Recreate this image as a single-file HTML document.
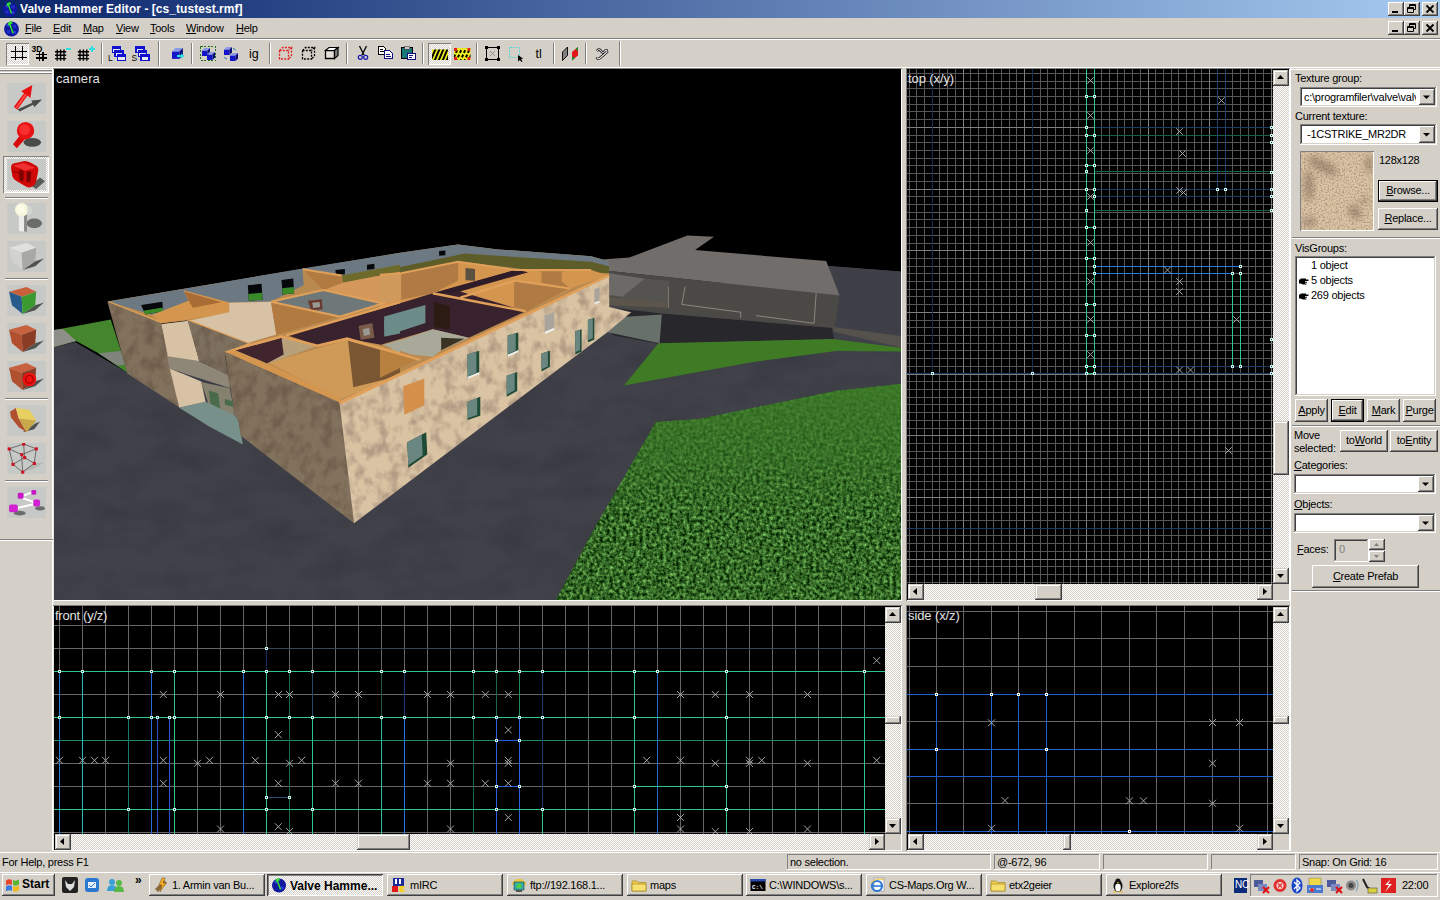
<!DOCTYPE html><html><head><meta charset="utf-8"><title>Valve Hammer Editor</title><style>
*{box-sizing:border-box;margin:0;padding:0}
html,body{width:1440px;height:900px;overflow:hidden;background:#d4d0c8;font-family:"Liberation Sans",sans-serif;font-size:11px;color:#000}
.a{position:absolute}
.t{position:absolute;white-space:nowrap;line-height:1}
.raised{box-shadow:inset -1px -1px #404040,inset 1px 1px #fff,inset -2px -2px #808080,inset 2px 2px #d4d0c8;background:#d4d0c8}
.sbb{box-shadow:inset -1px -1px #404040,inset 1px 1px #d4d0c8,inset -2px -2px #808080,inset 2px 2px #fff;background:#d4d0c8}
.sunken{box-shadow:inset -1px -1px #fff,inset 1px 1px #808080,inset -2px -2px #d4d0c8,inset 2px 2px #404040}
.sunk1{box-shadow:inset -1px -1px #fff,inset 1px 1px #808080}
.track{background-color:#ebe9e5;background-image:conic-gradient(#fff 25%,#d4d0c8 0 50%,#fff 0 75%,#d4d0c8 0);background-size:2px 2px}
.u{text-decoration:underline}
svg{position:absolute;display:block}
</style></head><body>
<div class="a " style="left:0px;top:0px;width:1440px;height:18px;background:linear-gradient(90deg,#0a246a 0%,#a6caf0 100%)"></div>
<svg style="left:2px;top:1px" width="16" height="16" viewBox="0 0 16 16"><circle cx="8" cy="8.5" r="7" fill="#1018a0"/><circle cx="5" cy="5" r="1.6" fill="#2838d8"/><circle cx="11" cy="6" r="1.8" fill="#2030c8"/><circle cx="5" cy="11" r="1.8" fill="#2030c8"/><circle cx="11" cy="11.5" r="1.6" fill="#2838d8"/><circle cx="8" cy="8" r="1.5" fill="#000070"/><path d="M5 2.2 L8.2 1 L9 3.2 L7.2 4 L10.2 12.2 L8.8 12.8 L5.8 4.6 L4.4 5.2 Z" fill="#30e030"/></svg>
<div class="t" style="left:20px;top:3px;font-size:12px;color:#fff;font-weight:bold;letter-spacing:0.05px">Valve Hammer Editor - [cs_tustest.rmf]</div>
<div class="a raised" style="left:1388px;top:2px;width:16px;height:14px;"></div>
<div class="a " style="left:1392px;top:11px;width:6px;height:2px;background:#000"></div>
<div class="a raised" style="left:1404px;top:2px;width:16px;height:14px;"></div>
<svg style="left:1404px;top:2px" width="16" height="14"><path d="M5.5 2.5h6v5h-6z M5.5 3.5h6" fill="none" stroke="#000" stroke-width="1"/><path d="M3.5 5.5h6v5h-6z" fill="#d4d0c8" stroke="#000"/><path d="M3.5 6.5h6" stroke="#000"/></svg>
<div class="a raised" style="left:1422px;top:2px;width:16px;height:14px;"></div>
<svg style="left:1422px;top:2px" width="16" height="14"><path d="M4.5 3.5l7 7M11.5 3.5l-7 7" stroke="#000" stroke-width="1.8"/></svg>
<div class="a raised" style="left:1388px;top:21px;width:16px;height:14px;"></div>
<div class="a " style="left:1392px;top:30px;width:6px;height:2px;background:#000"></div>
<div class="a raised" style="left:1404px;top:21px;width:16px;height:14px;"></div>
<svg style="left:1404px;top:21px" width="16" height="14"><path d="M5.5 2.5h6v5h-6z M5.5 3.5h6" fill="none" stroke="#000" stroke-width="1"/><path d="M3.5 5.5h6v5h-6z" fill="#d4d0c8" stroke="#000"/><path d="M3.5 6.5h6" stroke="#000"/></svg>
<div class="a raised" style="left:1422px;top:21px;width:16px;height:14px;"></div>
<svg style="left:1422px;top:21px" width="16" height="14"><path d="M4.5 3.5l7 7M11.5 3.5l-7 7" stroke="#000" stroke-width="1.8"/></svg>
<svg style="left:3px;top:20px" width="17" height="17" viewBox="0 0 16 16"><circle cx="8" cy="8.5" r="7" fill="#1018a0"/><circle cx="5" cy="5" r="1.6" fill="#2838d8"/><circle cx="11" cy="6" r="1.8" fill="#2030c8"/><circle cx="5" cy="11" r="1.8" fill="#2030c8"/><circle cx="11" cy="11.5" r="1.6" fill="#2838d8"/><circle cx="8" cy="8" r="1.5" fill="#000070"/><path d="M5 2.2 L8.2 1 L9 3.2 L7.2 4 L10.2 12.2 L8.8 12.8 L5.8 4.6 L4.4 5.2 Z" fill="#30e030"/></svg>
<div class="t" style="left:25px;top:23px;font-size:11px;color:#000;letter-spacing:-0.25px;"><span class="u">F</span>ile</div>
<div class="t" style="left:53px;top:23px;font-size:11px;color:#000;letter-spacing:-0.25px;"><span class="u">E</span>dit</div>
<div class="t" style="left:83px;top:23px;font-size:11px;color:#000;letter-spacing:-0.25px;"><span class="u">M</span>ap</div>
<div class="t" style="left:116px;top:23px;font-size:11px;color:#000;letter-spacing:-0.25px;"><span class="u">V</span>iew</div>
<div class="t" style="left:150px;top:23px;font-size:11px;color:#000;letter-spacing:-0.25px;"><span class="u">T</span>ools</div>
<div class="t" style="left:186px;top:23px;font-size:11px;color:#000;letter-spacing:-0.25px;"><span class="u">W</span>indow</div>
<div class="t" style="left:236px;top:23px;font-size:11px;color:#000;letter-spacing:-0.25px;"><span class="u">H</span>elp</div>
<div class="a " style="left:0px;top:38px;width:1440px;height:1px;background:#808080"></div>
<div class="a " style="left:0px;top:39px;width:1440px;height:1px;background:#fff"></div>
<div class="a " style="left:0px;top:67px;width:1440px;height:1px;background:#fff"></div>
<div class="a " style="left:101px;top:43px;width:1px;height:21px;background:#808080"></div>
<div class="a " style="left:102px;top:43px;width:1px;height:21px;background:#fff"></div>
<div class="a " style="left:191px;top:43px;width:1px;height:21px;background:#808080"></div>
<div class="a " style="left:192px;top:43px;width:1px;height:21px;background:#fff"></div>
<div class="a " style="left:269px;top:43px;width:1px;height:21px;background:#808080"></div>
<div class="a " style="left:270px;top:43px;width:1px;height:21px;background:#fff"></div>
<div class="a " style="left:346px;top:43px;width:1px;height:21px;background:#808080"></div>
<div class="a " style="left:347px;top:43px;width:1px;height:21px;background:#fff"></div>
<div class="a " style="left:422px;top:43px;width:1px;height:21px;background:#808080"></div>
<div class="a " style="left:423px;top:43px;width:1px;height:21px;background:#fff"></div>
<div class="a " style="left:476px;top:43px;width:1px;height:21px;background:#808080"></div>
<div class="a " style="left:477px;top:43px;width:1px;height:21px;background:#fff"></div>
<div class="a " style="left:553px;top:43px;width:1px;height:21px;background:#808080"></div>
<div class="a " style="left:554px;top:43px;width:1px;height:21px;background:#fff"></div>
<div class="a " style="left:585px;top:43px;width:1px;height:21px;background:#808080"></div>
<div class="a " style="left:586px;top:43px;width:1px;height:21px;background:#fff"></div>
<div class="a " style="left:158px;top:41px;width:1px;height:25px;background:#808080"></div>
<div class="a " style="left:159px;top:41px;width:1px;height:25px;background:#fff"></div>
<div class="a " style="left:619px;top:41px;width:1px;height:25px;background:#808080"></div>
<div class="a " style="left:620px;top:41px;width:1px;height:25px;background:#fff"></div>
<div class="a track" style="left:6px;top:43px;width:23px;height:22px;box-shadow:inset 1px 1px #808080,inset -1px -1px #fff"></div>
<div class="a track" style="left:428px;top:43px;width:23px;height:22px;box-shadow:inset 1px 1px #808080,inset -1px -1px #fff"></div>
<svg style="left:0;top:40px" width="640" height="28" viewBox="0 40 640 28" shape-rendering="crispEdges"><path d="M15.5 46v14M22.5 46v14M11 51.5h16M11 57.5h16" stroke="#000" stroke-width="1.5" fill="none"/><text x="31.5" y="52" font-family="Liberation Sans" font-weight="bold" font-size="8.5" fill="#000" shape-rendering="auto">3D</text><path d="M39.5 52v8.5M43 52v8.5M36 54.5h10.5M36 58h10.5" stroke="#000" stroke-width="1.3" fill="none"/><path d="M57.2 49.6v11.2M55.0 51.8h11.2M60.6 49.6v11.2M55.0 55.2h11.2M64.0 49.6v11.2M55.0 58.6h11.2" stroke="#000" stroke-width="1.4" fill="none" shape-rendering="auto"/><rect x="66" y="48" width="5" height="2" fill="#30e0e0"/><path d="M80.0 49.6v11.2M77.8 51.8h11.2M83.4 49.6v11.2M77.8 55.2h11.2M86.8 49.6v11.2M77.8 58.6h11.2" stroke="#000" stroke-width="1.4" fill="none" shape-rendering="auto"/><rect x="88.5" y="48" width="6" height="2" fill="#30e0e0"/><rect x="90.5" y="46" width="2" height="6" fill="#30e0e0"/><text x="108" y="61" font-family="Liberation Sans" font-size="8.5" fill="#000" shape-rendering="auto">L</text><rect x="112.5" y="46.5" width="8" height="6" fill="#e8e8f0" stroke="#1010d0" stroke-width="1.2"/><rect x="112" y="46" width="9" height="3.2" fill="#1010d0"/><rect x="115.0" y="50.5" width="8" height="6" fill="#e8e8f0" stroke="#1010d0" stroke-width="1.2"/><rect x="114.5" y="50" width="9" height="3.2" fill="#1010d0"/><rect x="117.5" y="54.5" width="8" height="6" fill="#e8e8f0" stroke="#1010d0" stroke-width="1.2"/><rect x="117" y="54" width="9" height="3.2" fill="#1010d0"/><text x="131.5" y="61" font-family="Liberation Sans" font-size="8.5" fill="#000" shape-rendering="auto">S</text><rect x="136.0" y="46.5" width="8" height="6" fill="#e8e8f0" stroke="#1010d0" stroke-width="1.2"/><rect x="135.5" y="46" width="9" height="3.2" fill="#1010d0"/><rect x="138.5" y="50.5" width="8" height="6" fill="#e8e8f0" stroke="#1010d0" stroke-width="1.2"/><rect x="138.0" y="50" width="9" height="3.2" fill="#1010d0"/><rect x="141.0" y="54.5" width="8" height="6" fill="#e8e8f0" stroke="#1010d0" stroke-width="1.2"/><rect x="140.5" y="54" width="9" height="3.2" fill="#1010d0"/><g shape-rendering="auto"><polygon points="172,51.375 179.5,51.375 179.5,58.875 172,58.875" fill="#1414c8"/><polygon points="172,51.375 175.375,48 182.875,48 179.5,51.375" fill="#8a9ae8"/><polygon points="179.5,51.375 182.875,48 182.875,55.5 179.5,58.875" fill="#080878"/><path d="M177 56h5" stroke="#30e0e0" stroke-width="2.2"/><polygon points="181,53.5 184.5,56 181,58.5" fill="#30e0e0"/></g><rect x="200.5" y="46.5" width="15" height="14" fill="none" stroke="#207020" stroke-dasharray="2 1.5"/><g shape-rendering="auto"><polygon points="202,50.475 207.5,50.475 207.5,55.975 202,55.975" fill="#1414c8"/><polygon points="202,50.475 204.475,48 209.975,48 207.5,50.475" fill="#8a9ae8"/><polygon points="207.5,50.475 209.975,48 209.975,53.5 207.5,55.975" fill="#080878"/><polygon points="207,54.475 212.5,54.475 212.5,59.975 207,59.975" fill="#1414c8"/><polygon points="207,54.475 209.475,52 214.975,52 212.5,54.475" fill="#8a9ae8"/><polygon points="212.5,54.475 214.975,52 214.975,57.5 212.5,59.975" fill="#080878"/></g><g shape-rendering="auto"><polygon points="224,49.475 229.5,49.475 229.5,54.975 224,54.975" fill="#1414c8"/><polygon points="224,49.475 226.475,47 231.975,47 229.5,49.475" fill="#8a9ae8"/><polygon points="229.5,49.475 231.975,47 231.975,52.5 229.5,54.975" fill="#080878"/><polygon points="230,55.475 235.5,55.475 235.5,60.975 230,60.975" fill="#1414c8"/><polygon points="230,55.475 232.475,53 237.975,53 235.5,55.475" fill="#8a9ae8"/><polygon points="235.5,55.475 237.975,53 237.975,58.5 235.5,60.975" fill="#080878"/><path d="M233 48.5q2 0 2.5 2M227 59q-2 0-2.5-2" stroke="#2080a0" fill="none" stroke-width="1"/></g><text x="249" y="58" font-family="Liberation Sans" font-size="12.5" fill="#000" shape-rendering="auto">ig</text><path d="M279.5 50.5h9v8.5h-9zM279.5 50.5l3-3h9l-3 3M291.5 47.5v8.5l-3 3" fill="none" stroke="#e02020" stroke-width="1.3" stroke-dasharray="2 1.3" shape-rendering="auto"/><path d="M302.5 50.5h9v8.5h-9zM302.5 50.5l3-3h9l-3 3M314.5 47.5v8.5l-3 3" fill="none" stroke="#000" stroke-width="1.3" stroke-dasharray="2 1.3" shape-rendering="auto"/><g shape-rendering="auto"><polygon points="325.5,50.5 334.5,50.5 334.5,58.5 325.5,58.5" fill="#e4e0d8" stroke="#000" stroke-width="1.3"/><polygon points="325.5,50.5 329,47.5 338,47.5 334.5,50.5" fill="#fff" stroke="#000" stroke-width="1.2"/><polygon points="334.5,50.5 338,47.5 338,55.5 334.5,58.5" fill="#808080" stroke="#000" stroke-width="1.2"/></g><g shape-rendering="auto" fill="none"><path d="M359.5 46l4.5 9M366.5 46l-4.5 9" stroke="#000" stroke-width="1.3"/><circle cx="360.3" cy="57.3" r="2" stroke="#1818b0" stroke-width="1.2"/><circle cx="365.7" cy="57.3" r="2" stroke="#1818b0" stroke-width="1.2"/></g><path d="M378.5 46.5h5l2 2v6h-7z" fill="#fff" stroke="#000"/><path d="M380 49.5h3M380 51.5h4" stroke="#000"/><path d="M384.5 50.5h5l3 3v5h-8z" fill="#fff" stroke="#101080"/><path d="M386 54.5h4M386 56.5h5" stroke="#101080"/><rect x="401.5" y="47.5" width="11" height="11" fill="#187878" stroke="#000"/><rect x="404.5" y="46" width="5" height="3" fill="#c8c8c8" stroke="#444" stroke-width="0.6"/><rect x="407.5" y="53.5" width="8" height="6" fill="#fff" stroke="#101080"/><path d="M409 55.5h4M409 57.5h3" stroke="#101080"/><clipPath id="cst"><rect x="432" y="49.5" width="16" height="10.5"/></clipPath><g clip-path="url(#cst)" shape-rendering="auto"><rect x="430" y="48" width="20" height="14" fill="#f0f020"/><path d="M430 62l6-14M434 62l6-14M438 62l6-14M442 62l6-14M446 62l6-14" stroke="#000" stroke-width="2"/></g><clipPath id="cst2"><rect x="454" y="48" width="16.5" height="12"/></clipPath><g clip-path="url(#cst2)" shape-rendering="auto"><rect x="452" y="46" width="20" height="16" fill="#f0f020"/><path d="M452 62l6-14M456 62l6-14M460 62l6-14M464 62l6-14M468 62l6-14" stroke="#000" stroke-width="2" stroke-dasharray="3 2"/><rect x="454" y="48" width="3" height="3" fill="#e02010"/><rect x="467.5" y="48" width="3" height="3" fill="#e02010"/><rect x="454" y="57" width="3" height="3" fill="#e02010"/><rect x="467.5" y="57" width="3" height="3" fill="#e02010"/></g><rect x="486.5" y="47.5" width="12" height="12" fill="none" stroke="#000" stroke-width="1.4"/><path d="M490 51l5 5M495 51l-5 5" stroke="#909090" shape-rendering="auto"/><rect x="485" y="46" width="3" height="3" fill="#000"/><rect x="497" y="46" width="3" height="3" fill="#000"/><rect x="485" y="58" width="3" height="3" fill="#000"/><rect x="497" y="58" width="3" height="3" fill="#000"/><rect x="509.5" y="47.5" width="10" height="10" fill="none" stroke="#60d8d0" stroke-width="1.2" stroke-dasharray="2 1"/><polygon points="518,55 518,61.5 519.8,60 521.5,62 522.5,61.2 521,59.3 523,58.5" fill="#000" shape-rendering="auto"/><text x="535.5" y="58" font-family="Liberation Sans" font-size="12.5" fill="#000" shape-rendering="auto">tl</text><g shape-rendering="auto"><polygon points="562.5,52 567.5,47 567.5,55.5 562.5,60.5" fill="#808080" stroke="#000" stroke-width="0.9"/><polygon points="572,52 578,47 578,55.5 572,60.5" fill="#e01818"/><polygon points="575.5,49 578,47 578,51" fill="#109030"/><polygon points="572,56.5 572,60.5 575,58" fill="#109030"/></g><g shape-rendering="auto" fill="none"><path d="M597 51q2-3 4 0t4 0q2-2 2 1l-7 6q-3 2-3-1" stroke="#000" stroke-width="2.6"/><path d="M597 51q2-3 4 0t4 0q2-2 2 1l-7 6q-3 2-3-1" stroke="#e8e8e8" stroke-width="1.2"/></g></svg>
<div class="a " style="left:0px;top:69px;width:53px;height:1px;background:#fff"></div>
<div class="a " style="left:0px;top:70px;width:53px;height:1px;background:#808080"></div>
<div class="a " style="left:0px;top:72px;width:53px;height:1px;background:#fff"></div>
<div class="a " style="left:0px;top:73px;width:53px;height:1px;background:#808080"></div>
<div class="a " style="left:52px;top:68px;width:1px;height:783px;background:#fff"></div>
<div class="a " style="left:53px;top:68px;width:1px;height:783px;background:#e6e4de"></div>
<div class="a " style="left:5px;top:197px;width:43px;height:1px;background:#808080"></div>
<div class="a " style="left:5px;top:198px;width:43px;height:1px;background:#fff"></div>
<div class="a " style="left:5px;top:278px;width:43px;height:1px;background:#808080"></div>
<div class="a " style="left:5px;top:279px;width:43px;height:1px;background:#fff"></div>
<div class="a " style="left:5px;top:398px;width:43px;height:1px;background:#808080"></div>
<div class="a " style="left:5px;top:399px;width:43px;height:1px;background:#fff"></div>
<div class="a " style="left:5px;top:480px;width:43px;height:1px;background:#808080"></div>
<div class="a " style="left:5px;top:481px;width:43px;height:1px;background:#fff"></div>
<div class="a " style="left:0px;top:539px;width:53px;height:1px;background:#808080"></div>
<div class="a " style="left:0px;top:540px;width:53px;height:1px;background:#fff"></div>
<div class="a track" style="left:3px;top:156px;width:46px;height:37px;box-shadow:inset 1px 1px #808080,inset -1px -1px #fff"></div>
<svg style="left:7px;top:83px" width="39" height="31" viewBox="0 0 40 32"><rect width="40" height="32" fill="#c7c9c6"/><polygon points="11,27 13,29.5 27,22.5 28,25 36,17 25,18 26,20.5" fill="#4a4c4a"/><polygon points="7,24.5 10.5,27.5 21,13 24,15.5 26,2 14.5,8.5 17.5,10.5" fill="#e81010"/><polygon points="9,25 18.5,11 20,12 10,26.5" fill="#ff5050"/></svg>
<svg style="left:7px;top:121px" width="39" height="31" viewBox="0 0 40 32"><rect width="40" height="32" fill="#c7c9c6"/><ellipse cx="26" cy="22" rx="9" ry="4.5" fill="#4a4c4a"/><polygon points="6,24 14,14 19,18 10,28" fill="#d80c0c"/><circle cx="19" cy="10" r="9" fill="#e81414"/><circle cx="18" cy="9" r="5.5" fill="#f83030"/></svg>
<svg style="left:7px;top:159px" width="39" height="31" viewBox="0 0 40 32"><rect width="40" height="32" fill="#c7c9c6"/><polygon points="24,27 34,19 39,23 30,31" fill="#5a5c5a"/><path d="M4 9q0-5 5-5l9-2q3 0 7 2l5 3q3 2 2 6l-2 10q-1 4-5 6q-3 1-6-1l-9-5q-5-3-5-8z" fill="#d00808"/><path d="M6 7l11-3l12 5l-10 3z" fill="#f03030"/><path d="M12 12q3-2 5 1l0 9q-2 2-4 0z M20 13q3-1 5 1l-1 9q-2 2-4 0z" fill="#7a0202"/><path d="M5 12q6 4 13 1" stroke="#900" stroke-width="1.2" fill="none"/></svg>
<svg style="left:7px;top:203px" width="39" height="31" viewBox="0 0 40 32"><rect width="40" height="32" fill="#c7c9c6"/><ellipse cx="28" cy="21" rx="8" ry="5" fill="#6a6c6a"/><rect x="12" y="12" width="8.5" height="17.5" rx="2.5" fill="#ecece8"/><rect x="17.5" y="12" width="3" height="17.5" fill="#8a8a88"/><circle cx="15" cy="7" r="7" fill="#f6f6dc"/><circle cx="14" cy="6" r="4" fill="#fcfce8"/><rect x="21" y="3" width="4.5" height="9" rx="2" fill="#d4d4d0"/></svg>
<svg style="left:7px;top:241px" width="39" height="31" viewBox="0 0 40 32"><rect width="40" height="32" fill="#c7c9c6"/><polygon points="16,30 29,21 38,18 29,26" fill="#50524f"/><polygon points="2,7 20,2 30,7 15,12" fill="#e0e0de"/><polygon points="2,7 15,12 16,30 5,21" fill="#d2d2d0"/><polygon points="15,12 30,7 29,21 16,30" fill="#a8a8a6"/></svg>
<svg style="left:7px;top:285px" width="39" height="31" viewBox="0 0 40 32"><rect width="40" height="32" fill="#c7c9c6"/><polygon points="16,30 29,21 38,18 29,26" fill="#50524f"/><polygon points="2,7 20,2 30,7 15,12" fill="#c8603c"/><polygon points="2,7 15,12 16,30 5,21" fill="#285a8c"/><polygon points="15,12 30,7 29,21 16,30" fill="#3a9a30"/></svg>
<svg style="left:7px;top:323px" width="39" height="31" viewBox="0 0 40 32"><rect width="40" height="32" fill="#c7c9c6"/><polygon points="16,30 29,21 38,18 29,26" fill="#50524f"/><polygon points="2,7 20,2 30,7 15,12" fill="#c8623e"/><polygon points="2,7 15,12 16,30 5,21" fill="#b0502e"/><polygon points="15,12 30,7 29,21 16,30" fill="#8a3c24"/></svg>
<svg style="left:7px;top:361px" width="39" height="31" viewBox="0 0 40 32"><rect width="40" height="32" fill="#c7c9c6"/><polygon points="16,30 29,21 38,18 29,26" fill="#50524f"/><polygon points="2,7 20,2 30,7 15,12" fill="#c8623e"/><polygon points="2,7 15,12 16,30 5,21" fill="#b0502e"/><polygon points="15,12 30,7 29,21 16,30" fill="#8a3c24"/><circle cx="23" cy="19" r="7" fill="#f01010"/><circle cx="23" cy="19" r="4" fill="none" stroke="#900" stroke-width="1.2"/></svg>
<svg style="left:7px;top:405px" width="39" height="31" viewBox="0 0 40 32"><rect width="40" height="32" fill="#c7c9c6"/><polygon points="16,28 29,19 34,17 28,25" fill="#50524f"/><polygon points="3,7 9,3 12,14 20,28 12,23 4,13" fill="#b0502e"/><polygon points="9,3 23,5 30,16 12,14" fill="#e8d060"/><polygon points="12,14 30,16 20,28" fill="#c8a848"/></svg>
<svg style="left:7px;top:443px" width="39" height="31" viewBox="0 0 40 32"><rect width="40" height="32" fill="#c7c9c6"/><polygon points="16,30 28,21 38,20 27,27" fill="#b4b6b2"/><path d="M2 6L17 1" stroke="#505050" stroke-width="0.8"/><path d="M17 1L30 6" stroke="#505050" stroke-width="0.8"/><path d="M30 6L15 12" stroke="#505050" stroke-width="0.8"/><path d="M15 12L2 6" stroke="#505050" stroke-width="0.8"/><path d="M2 6L6 22" stroke="#505050" stroke-width="0.8"/><path d="M30 6L28 21" stroke="#505050" stroke-width="0.8"/><path d="M15 12L16 30" stroke="#505050" stroke-width="0.8"/><path d="M6 22L16 30" stroke="#505050" stroke-width="0.8"/><path d="M28 21L16 30" stroke="#505050" stroke-width="0.8"/><path d="M17 1L18 15" stroke="#505050" stroke-width="0.8"/><path d="M6 22L18 15" stroke="#505050" stroke-width="0.8"/><path d="M28 21L18 15" stroke="#505050" stroke-width="0.8"/><rect x="0.5" y="4.5" width="3.2" height="3.2" fill="#d01020"/><rect x="15.5" y="-0.5" width="3.2" height="3.2" fill="#d01020"/><rect x="28.5" y="4.5" width="3.2" height="3.2" fill="#d01020"/><rect x="13.5" y="10.5" width="3.2" height="3.2" fill="#d01020"/><rect x="4.5" y="20.5" width="3.2" height="3.2" fill="#d01020"/><rect x="26.5" y="19.5" width="3.2" height="3.2" fill="#d01020"/><rect x="14.5" y="28.5" width="3.2" height="3.2" fill="#d01020"/><rect x="16.5" y="13.5" width="3.2" height="3.2" fill="#d01020"/></svg>
<svg style="left:7px;top:487px" width="39" height="31" viewBox="0 0 40 32"><rect width="40" height="32" fill="#c7c9c6"/><ellipse cx="13" cy="27" rx="6" ry="2.5" fill="#6a6c6a"/><ellipse cx="34" cy="22" rx="5" ry="2.2" fill="#6a6c6a"/><path d="M14 10L27 5M15 11L31 17M9 22L31 17" stroke="#fff" stroke-width="2"/><rect x="11" y="6" width="6" height="6" rx="1.5" fill="#c818c8"/><rect x="25" y="3" width="5" height="5" rx="1.5" fill="#c818c8"/><rect x="27" y="13" width="7" height="7" rx="2" fill="#d020d0"/><rect x="2" y="18" width="9" height="8" rx="2" fill="#d020d0"/></svg>
<div class="a " style="left:53px;top:68px;width:849px;height:533px;background:#000;box-shadow:inset 1px 1px #808080,inset -1px -1px #fff"></div>
<div class="a " style="left:906px;top:68px;width:384px;height:533px;background:#000;box-shadow:inset 1px 1px #808080,inset -1px -1px #fff"></div>
<div class="a " style="left:53px;top:605px;width:849px;height:246px;background:#000;box-shadow:inset 1px 1px #808080,inset -1px -1px #fff"></div>
<div class="a " style="left:906px;top:605px;width:384px;height:246px;background:#000;box-shadow:inset 1px 1px #808080,inset -1px -1px #fff"></div>
<div class="a " style="left:53px;top:69px;width:1px;height:532px;background:#e6e4de"></div>
<div class="a " style="left:53px;top:606px;width:1px;height:245px;background:#e6e4de"></div>
<div class="a track" style="left:1273px;top:70px;width:16px;height:514px;"></div>
<div class="a sbb" style="left:1273px;top:70px;width:16px;height:16px;"></div>
<svg style="left:0;top:0" width="1440" height="900" viewBox="0 0 1440 900"><polygon points="1277,79 1284,79 1280.5,75" fill="#000"/></svg>
<div class="a sbb" style="left:1273px;top:568px;width:16px;height:16px;"></div>
<svg style="left:0;top:0" width="1440" height="900" viewBox="0 0 1440 900"><polygon points="1277,574 1284,574 1280.5,578" fill="#000"/></svg>
<div class="a sbb" style="left:1273px;top:421px;width:16px;height:54px;"></div>
<div class="a track" style="left:908px;top:584px;width:365px;height:16px;"></div>
<div class="a sbb" style="left:908px;top:584px;width:16px;height:16px;"></div>
<svg style="left:0;top:0" width="1440" height="900" viewBox="0 0 1440 900"><polygon points="917,588 917,595 913,591.5" fill="#000"/></svg>
<div class="a sbb" style="left:1257px;top:584px;width:16px;height:16px;"></div>
<svg style="left:0;top:0" width="1440" height="900" viewBox="0 0 1440 900"><polygon points="1263,588 1263,595 1267,591.5" fill="#000"/></svg>
<div class="a sbb" style="left:1035px;top:584px;width:27px;height:16px;"></div>
<div class="a " style="left:1273px;top:584px;width:16px;height:16px;background:#d4d0c8"></div>
<div class="a track" style="left:885px;top:607px;width:16px;height:227px;"></div>
<div class="a sbb" style="left:885px;top:607px;width:16px;height:16px;"></div>
<svg style="left:0;top:0" width="1440" height="900" viewBox="0 0 1440 900"><polygon points="889,616 896,616 892.5,612" fill="#000"/></svg>
<div class="a sbb" style="left:885px;top:818px;width:16px;height:16px;"></div>
<svg style="left:0;top:0" width="1440" height="900" viewBox="0 0 1440 900"><polygon points="889,824 896,824 892.5,828" fill="#000"/></svg>
<div class="a sbb" style="left:885px;top:716px;width:16px;height:8px;"></div>
<div class="a track" style="left:55px;top:834px;width:830px;height:16px;"></div>
<div class="a sbb" style="left:55px;top:834px;width:16px;height:16px;"></div>
<svg style="left:0;top:0" width="1440" height="900" viewBox="0 0 1440 900"><polygon points="64,838 64,845 60,841.5" fill="#000"/></svg>
<div class="a sbb" style="left:869px;top:834px;width:16px;height:16px;"></div>
<svg style="left:0;top:0" width="1440" height="900" viewBox="0 0 1440 900"><polygon points="875,838 875,845 879,841.5" fill="#000"/></svg>
<div class="a sbb" style="left:357px;top:834px;width:53px;height:16px;"></div>
<div class="a " style="left:885px;top:834px;width:16px;height:16px;background:#d4d0c8"></div>
<div class="a track" style="left:1273px;top:607px;width:16px;height:227px;"></div>
<div class="a sbb" style="left:1273px;top:607px;width:16px;height:16px;"></div>
<svg style="left:0;top:0" width="1440" height="900" viewBox="0 0 1440 900"><polygon points="1277,616 1284,616 1280.5,612" fill="#000"/></svg>
<div class="a sbb" style="left:1273px;top:818px;width:16px;height:16px;"></div>
<svg style="left:0;top:0" width="1440" height="900" viewBox="0 0 1440 900"><polygon points="1277,824 1284,824 1280.5,828" fill="#000"/></svg>
<div class="a sbb" style="left:1273px;top:716px;width:16px;height:8px;"></div>
<div class="a track" style="left:908px;top:834px;width:365px;height:16px;"></div>
<div class="a sbb" style="left:908px;top:834px;width:16px;height:16px;"></div>
<svg style="left:0;top:0" width="1440" height="900" viewBox="0 0 1440 900"><polygon points="917,838 917,845 913,841.5" fill="#000"/></svg>
<div class="a sbb" style="left:1257px;top:834px;width:16px;height:16px;"></div>
<svg style="left:0;top:0" width="1440" height="900" viewBox="0 0 1440 900"><polygon points="1263,838 1263,845 1267,841.5" fill="#000"/></svg>
<div class="a sbb" style="left:1063px;top:834px;width:8px;height:16px;"></div>
<div class="a " style="left:1273px;top:834px;width:16px;height:16px;background:#d4d0c8"></div>
<svg style="left:907px;top:69px" width="366" height="515" viewBox="907 69 366 515" shape-rendering="crispEdges"><path d="M909.5 69V584M916.5 69V584M924.5 69V584M932.5 69V584M939.5 69V584M947.5 69V584M955.5 69V584M970.5 69V584M978.5 69V584M986.5 69V584M993.5 69V584M1001.5 69V584M1009.5 69V584M1016.5 69V584M1032.5 69V584M1040.5 69V584M1047.5 69V584M1055.5 69V584M1063.5 69V584M1070.5 69V584M1078.5 69V584M1094.5 69V584M1101.5 69V584M1109.5 69V584M1117.5 69V584M1124.5 69V584M1132.5 69V584M1140.5 69V584M1155.5 69V584M1163.5 69V584M1171.5 69V584M1178.5 69V584M1186.5 69V584M1194.5 69V584M1201.5 69V584M1217.5 69V584M1225.5 69V584M1232.5 69V584M1240.5 69V584M1248.5 69V584M1255.5 69V584M1263.5 69V584M907 73.5H1273M907 81.5H1273M907 88.5H1273M907 96.5H1273M907 104.5H1273M907 111.5H1273M907 119.5H1273M907 135.5H1273M907 142.5H1273M907 150.5H1273M907 158.5H1273M907 165.5H1273M907 173.5H1273M907 181.5H1273M907 196.5H1273M907 204.5H1273M907 212.5H1273M907 219.5H1273M907 227.5H1273M907 235.5H1273M907 243.5H1273M907 258.5H1273M907 266.5H1273M907 273.5H1273M907 281.5H1273M907 289.5H1273M907 296.5H1273M907 304.5H1273M907 320.5H1273M907 327.5H1273M907 335.5H1273M907 343.5H1273M907 350.5H1273M907 358.5H1273M907 366.5H1273M907 381.5H1273M907 389.5H1273M907 397.5H1273M907 404.5H1273M907 412.5H1273M907 420.5H1273M907 428.5H1273M907 443.5H1273M907 451.5H1273M907 458.5H1273M907 466.5H1273M907 474.5H1273M907 481.5H1273M907 489.5H1273M907 505.5H1273M907 512.5H1273M907 520.5H1273M907 528.5H1273M907 535.5H1273M907 543.5H1273M907 551.5H1273M907 566.5H1273M907 574.5H1273M907 582.5H1273" stroke="#575757" fill="none"/><path d="M963.5 69V584M1024.5 69V584M1086.5 69V584M1148.5 69V584M1209.5 69V584M1271.5 69V584M907 127.5H1273M907 189.5H1273M907 250.5H1273M907 312.5H1273M907 374.5H1273M907 435.5H1273M907 497.5H1273M907 559.5H1273" stroke="#7e7e7e" fill="none"/><path d="M932.5 69L932.5 373.5" stroke="#18304e" stroke-width="1"/><path d="M1032.5 69L1032.5 373.5" stroke="#18304e" stroke-width="1"/><path d="M907 373.5L1273 373.5" stroke="#1b3a68" stroke-width="1"/><path d="M1094.5 366.5L1273 366.5" stroke="#1b3a68" stroke-width="1"/><path d="M907 528.5L1273 528.5" stroke="#1b3a68" stroke-width="1"/><path d="M1094.5 127.5L1273 127.5" stroke="#1b3c60" stroke-width="1"/><path d="M1094.5 135.5L1273 135.5" stroke="#17604a" stroke-width="1"/><path d="M1094.5 171.5L1273 171.5" stroke="#17604a" stroke-width="1"/><path d="M1094.5 189.5L1273 189.5" stroke="#1b3c60" stroke-width="1"/><path d="M1094.5 196.5L1273 196.5" stroke="#1b3c60" stroke-width="1"/><path d="M1094.5 210.5L1273 210.5" stroke="#17604a" stroke-width="1"/><path d="M1217.5 69L1217.5 189.5" stroke="#1c4068" stroke-width="1"/><path d="M1225.5 69L1225.5 189.5" stroke="#1c4068" stroke-width="1"/><path d="M1086.5 69L1086.5 373.5" stroke="#2fc88c" stroke-width="1"/><path d="M1094.5 69L1094.5 373.5" stroke="#2fc88c" stroke-width="1"/><path d="M1232.5 273.5L1232.5 366.5" stroke="#2fc88c" stroke-width="1"/><path d="M1240.5 273.5L1240.5 366.5" stroke="#2fc88c" stroke-width="1"/><path d="M1086.5 96.5L1094.5 96.5" stroke="#2fc88c" stroke-width="1"/><path d="M1086.5 135.5L1094.5 135.5" stroke="#2fc88c" stroke-width="1"/><path d="M1086.5 165.5L1094.5 165.5" stroke="#2fc88c" stroke-width="1"/><path d="M1086.5 227.5L1094.5 227.5" stroke="#2fc88c" stroke-width="1"/><path d="M1086.5 258.5L1094.5 258.5" stroke="#2fc88c" stroke-width="1"/><path d="M1086.5 304.5L1094.5 304.5" stroke="#2fc88c" stroke-width="1"/><path d="M1086.5 335.5L1094.5 335.5" stroke="#2fc88c" stroke-width="1"/><path d="M1086.5 366.5L1094.5 366.5" stroke="#2fc88c" stroke-width="1"/><path d="M1086.5 373.5L1094.5 373.5" stroke="#2fc88c" stroke-width="1"/><path d="M1094.5 266.5L1240.5 266.5" stroke="#2a78e0" stroke-width="1"/><path d="M1094.5 273.5L1232.5 273.5" stroke="#2a78e0" stroke-width="1"/><path d="M1087.2 77.2L1093.8 83.8M1093.8 77.2L1087.2 83.8M1087.2 112.2L1093.8 118.8M1093.8 112.2L1087.2 118.8M1087.2 147.2L1093.8 153.8M1093.8 147.2L1087.2 153.8M1087.2 193.2L1093.8 199.8M1093.8 193.2L1087.2 199.8M1087.2 239.2L1093.8 245.8M1093.8 239.2L1087.2 245.8M1087.2 278.2L1093.8 284.8M1093.8 278.2L1087.2 284.8M1087.2 316.2L1093.8 322.8M1093.8 316.2L1087.2 322.8M1087.2 351.2L1093.8 357.8M1093.8 351.2L1087.2 357.8M1218.2 97.2L1224.8 103.8M1224.8 97.2L1218.2 103.8M1176.2 128.2L1182.8 134.8M1182.8 128.2L1176.2 134.8M1179.2 150.2L1185.8 156.8M1185.8 150.2L1179.2 156.8M1176.2 187.2L1182.8 193.8M1182.8 187.2L1176.2 193.8M1180.2 189.2L1186.8 195.8M1186.8 189.2L1180.2 195.8M1164.2 266.7L1170.8 273.3M1170.8 266.7L1164.2 273.3M1176.2 278.2L1182.8 284.8M1182.8 278.2L1176.2 284.8M1176.2 288.2L1182.8 294.8M1182.8 288.2L1176.2 294.8M1233.2 316.2L1239.8 322.8M1239.8 316.2L1233.2 322.8M1176.2 366.7L1182.8 373.3M1182.8 366.7L1176.2 373.3M1187.2 366.7L1193.8 373.3M1193.8 366.7L1187.2 373.3M1225.2 447.2L1231.8 453.8M1231.8 447.2L1225.2 453.8" stroke="#b0b0b0" fill="none" shape-rendering="auto" stroke-width="0.9"/><rect x="1085.0" y="95.0" width="3" height="3" fill="#c8f4ee"/><rect x="1086.0" y="96.0" width="1" height="1" fill="#183030"/><rect x="1093.0" y="95.0" width="3" height="3" fill="#c8f4ee"/><rect x="1094.0" y="96.0" width="1" height="1" fill="#183030"/><rect x="1085.0" y="134.0" width="3" height="3" fill="#c8f4ee"/><rect x="1086.0" y="135.0" width="1" height="1" fill="#183030"/><rect x="1093.0" y="134.0" width="3" height="3" fill="#c8f4ee"/><rect x="1094.0" y="135.0" width="1" height="1" fill="#183030"/><rect x="1085.0" y="164.0" width="3" height="3" fill="#c8f4ee"/><rect x="1086.0" y="165.0" width="1" height="1" fill="#183030"/><rect x="1093.0" y="164.0" width="3" height="3" fill="#c8f4ee"/><rect x="1094.0" y="165.0" width="1" height="1" fill="#183030"/><rect x="1085.0" y="188.0" width="3" height="3" fill="#c8f4ee"/><rect x="1086.0" y="189.0" width="1" height="1" fill="#183030"/><rect x="1093.0" y="188.0" width="3" height="3" fill="#c8f4ee"/><rect x="1094.0" y="189.0" width="1" height="1" fill="#183030"/><rect x="1085.0" y="226.0" width="3" height="3" fill="#c8f4ee"/><rect x="1086.0" y="227.0" width="1" height="1" fill="#183030"/><rect x="1093.0" y="226.0" width="3" height="3" fill="#c8f4ee"/><rect x="1094.0" y="227.0" width="1" height="1" fill="#183030"/><rect x="1085.0" y="257.0" width="3" height="3" fill="#c8f4ee"/><rect x="1086.0" y="258.0" width="1" height="1" fill="#183030"/><rect x="1093.0" y="257.0" width="3" height="3" fill="#c8f4ee"/><rect x="1094.0" y="258.0" width="1" height="1" fill="#183030"/><rect x="1085.0" y="303.0" width="3" height="3" fill="#c8f4ee"/><rect x="1086.0" y="304.0" width="1" height="1" fill="#183030"/><rect x="1093.0" y="303.0" width="3" height="3" fill="#c8f4ee"/><rect x="1094.0" y="304.0" width="1" height="1" fill="#183030"/><rect x="1085.0" y="334.0" width="3" height="3" fill="#c8f4ee"/><rect x="1086.0" y="335.0" width="1" height="1" fill="#183030"/><rect x="1093.0" y="334.0" width="3" height="3" fill="#c8f4ee"/><rect x="1094.0" y="335.0" width="1" height="1" fill="#183030"/><rect x="1085.0" y="365.0" width="3" height="3" fill="#c8f4ee"/><rect x="1086.0" y="366.0" width="1" height="1" fill="#183030"/><rect x="1093.0" y="365.0" width="3" height="3" fill="#c8f4ee"/><rect x="1094.0" y="366.0" width="1" height="1" fill="#183030"/><rect x="1085.0" y="372.0" width="3" height="3" fill="#c8f4ee"/><rect x="1086.0" y="373.0" width="1" height="1" fill="#183030"/><rect x="1093.0" y="372.0" width="3" height="3" fill="#c8f4ee"/><rect x="1094.0" y="373.0" width="1" height="1" fill="#183030"/><rect x="1085.0" y="126.0" width="3" height="3" fill="#c8f4ee"/><rect x="1086.0" y="127.0" width="1" height="1" fill="#183030"/><rect x="1085.0" y="170.0" width="3" height="3" fill="#c8f4ee"/><rect x="1086.0" y="171.0" width="1" height="1" fill="#183030"/><rect x="1093.0" y="195.0" width="3" height="3" fill="#c8f4ee"/><rect x="1094.0" y="196.0" width="1" height="1" fill="#183030"/><rect x="1085.0" y="209.0" width="3" height="3" fill="#c8f4ee"/><rect x="1086.0" y="210.0" width="1" height="1" fill="#183030"/><rect x="1093.0" y="265.0" width="3" height="3" fill="#c8f4ee"/><rect x="1094.0" y="266.0" width="1" height="1" fill="#183030"/><rect x="1093.0" y="272.0" width="3" height="3" fill="#c8f4ee"/><rect x="1094.0" y="273.0" width="1" height="1" fill="#183030"/><rect x="1239.0" y="265.0" width="3" height="3" fill="#c8f4ee"/><rect x="1240.0" y="266.0" width="1" height="1" fill="#183030"/><rect x="1231.0" y="272.0" width="3" height="3" fill="#c8f4ee"/><rect x="1232.0" y="273.0" width="1" height="1" fill="#183030"/><rect x="1239.0" y="272.0" width="3" height="3" fill="#c8f4ee"/><rect x="1240.0" y="273.0" width="1" height="1" fill="#183030"/><rect x="1216.0" y="188.0" width="3" height="3" fill="#c8f4ee"/><rect x="1217.0" y="189.0" width="1" height="1" fill="#183030"/><rect x="1224.0" y="188.0" width="3" height="3" fill="#c8f4ee"/><rect x="1225.0" y="189.0" width="1" height="1" fill="#183030"/><rect x="1231.0" y="365.0" width="3" height="3" fill="#c8f4ee"/><rect x="1232.0" y="366.0" width="1" height="1" fill="#183030"/><rect x="1239.0" y="365.0" width="3" height="3" fill="#c8f4ee"/><rect x="1240.0" y="366.0" width="1" height="1" fill="#183030"/><rect x="931.0" y="372.0" width="3" height="3" fill="#c8f4ee"/><rect x="932.0" y="373.0" width="1" height="1" fill="#183030"/><rect x="1031.0" y="372.0" width="3" height="3" fill="#c8f4ee"/><rect x="1032.0" y="373.0" width="1" height="1" fill="#183030"/><rect x="1270.0" y="126.0" width="3" height="3" fill="#c8f4ee"/><rect x="1271.0" y="127.0" width="1" height="1" fill="#183030"/><rect x="1270.0" y="134.0" width="3" height="3" fill="#c8f4ee"/><rect x="1271.0" y="135.0" width="1" height="1" fill="#183030"/><rect x="1270.0" y="140.5" width="3" height="3" fill="#c8f4ee"/><rect x="1271.0" y="141.5" width="1" height="1" fill="#183030"/><rect x="1270.0" y="171.0" width="3" height="3" fill="#c8f4ee"/><rect x="1271.0" y="172.0" width="1" height="1" fill="#183030"/><rect x="1270.0" y="188.0" width="3" height="3" fill="#c8f4ee"/><rect x="1271.0" y="189.0" width="1" height="1" fill="#183030"/><rect x="1270.0" y="195.0" width="3" height="3" fill="#c8f4ee"/><rect x="1271.0" y="196.0" width="1" height="1" fill="#183030"/><rect x="1270.0" y="209.0" width="3" height="3" fill="#c8f4ee"/><rect x="1271.0" y="210.0" width="1" height="1" fill="#183030"/><rect x="1270.0" y="338.0" width="3" height="3" fill="#c8f4ee"/><rect x="1271.0" y="339.0" width="1" height="1" fill="#183030"/><rect x="1270.0" y="365.0" width="3" height="3" fill="#c8f4ee"/><rect x="1271.0" y="366.0" width="1" height="1" fill="#183030"/><rect x="1270.0" y="372.0" width="3" height="3" fill="#c8f4ee"/><rect x="1271.0" y="373.0" width="1" height="1" fill="#183030"/></svg>
<div class="t" style="left:908px;top:72px;font-size:13px;color:#e0e0e0;letter-spacing:-0.25px;letter-spacing:-0.1px">top (x/y)</div>
<svg style="left:54px;top:606px" width="831" height="228" viewBox="54 606 831 228" shape-rendering="crispEdges"><path d="M59.5 606V834M82.5 606V834M105.5 606V834M128.5 606V834M151.5 606V834M174.5 606V834M197.5 606V834M220.5 606V834M243.5 606V834M266.5 606V834M289.5 606V834M312.5 606V834M335.5 606V834M358.5 606V834M381.5 606V834M404.5 606V834M427.5 606V834M450.5 606V834M473.5 606V834M496.5 606V834M519.5 606V834M542.5 606V834M565.5 606V834M588.5 606V834M611.5 606V834M634.5 606V834M657.5 606V834M680.5 606V834M703.5 606V834M726.5 606V834M749.5 606V834M772.5 606V834M795.5 606V834M818.5 606V834M841.5 606V834M864.5 606V834M54 625.5H885M54 648.5H885M54 671.5H885M54 694.5H885M54 717.5H885M54 740.5H885M54 763.5H885M54 786.5H885M54 809.5H885M54 832.5H885" stroke="#666" fill="none"/><path d="M266.5 648.5L885 648.5" stroke="#3a4658" stroke-width="1"/><path d="M54 740.5L885 740.5" stroke="#1f8a66" stroke-width="1"/><path d="M59.5 671.5L59.5 834" stroke="#2a7ad8" stroke-width="1"/><path d="M82.5 671.5L82.5 834" stroke="#2ab8b8" stroke-width="1"/><path d="M128.5 717.5L128.5 834" stroke="#1a7a6a" stroke-width="1"/><path d="M151.5 671.5L151.5 834" stroke="#2a6ad8" stroke-width="1"/><path d="M174.5 671.5L174.5 834" stroke="#2fc88c" stroke-width="1"/><path d="M243.5 671.5L243.5 834" stroke="#2a6ad8" stroke-width="1"/><path d="M266.5 671.5L266.5 834" stroke="#2fc88c" stroke-width="1"/><path d="M289.5 671.5L289.5 834" stroke="#1d6a48" stroke-width="1"/><path d="M312.5 671.5L312.5 717.5" stroke="#2a4a66" stroke-width="1"/><path d="M312.5 717.5L312.5 834" stroke="#2fc88c" stroke-width="1"/><path d="M381.5 671.5L381.5 717.5" stroke="#1d5a40" stroke-width="1"/><path d="M381.5 717.5L381.5 834" stroke="#2cc0a0" stroke-width="1"/><path d="M404.5 671.5L404.5 717.5" stroke="#1c3a70" stroke-width="1"/><path d="M404.5 717.5L404.5 834" stroke="#2a70e0" stroke-width="1"/><path d="M473.5 671.5L473.5 834" stroke="#1d6a48" stroke-width="1"/><path d="M496.5 671.5L496.5 717.5" stroke="#1d6a48" stroke-width="1"/><path d="M496.5 717.5L496.5 834" stroke="#2a60e0" stroke-width="1"/><path d="M519.5 671.5L519.5 717.5" stroke="#238a5c" stroke-width="1"/><path d="M519.5 717.5L519.5 834" stroke="#2a60e0" stroke-width="1"/><path d="M542.5 671.5L542.5 809.5" stroke="#1b3a68" stroke-width="1"/><path d="M542.5 809.5L542.5 834" stroke="#2fc88c" stroke-width="1"/><path d="M634.5 671.5L634.5 834" stroke="#2fc88c" stroke-width="1"/><path d="M657.5 671.5L657.5 834" stroke="#2a66c8" stroke-width="1"/><path d="M726.5 671.5L726.5 834" stroke="#2fc88c" stroke-width="1"/><path d="M864.5 671.5L864.5 834" stroke="#2fc88c" stroke-width="1"/><path d="M157.5 717.5L157.5 834" stroke="#2a50d0" stroke-width="1"/><path d="M169.5 717.5L169.5 834" stroke="#2a50d0" stroke-width="1"/><path d="M266.5 648.5L266.5 671.5" stroke="#1c2c66" stroke-width="1"/><path d="M54 671.5L885 671.5" stroke="#2fc88c" stroke-width="1"/><path d="M54 717.5L885 717.5" stroke="#2fc88c" stroke-width="1"/><path d="M54 809.5L885 809.5" stroke="#2fc88c" stroke-width="1"/><path d="M266.5 797.5L289.5 797.5" stroke="#2a4a70" stroke-width="1"/><path d="M496.5 740.5L519.5 740.5" stroke="#2a60e0" stroke-width="1"/><path d="M496.5 786.5L519.5 786.5" stroke="#2a60e0" stroke-width="1"/><path d="M634.5 786.5L726.5 786.5" stroke="#2fc88c" stroke-width="1"/><path d="M159.8 691.0L166.8 698.0M166.8 691.0L159.8 698.0M217.0 691.0L224.0 698.0M224.0 691.0L217.0 698.0M275.0 691.0L282.0 698.0M282.0 691.0L275.0 698.0M286.0 691.0L293.0 698.0M293.0 691.0L286.0 698.0M332.0 691.0L339.0 698.0M339.0 691.0L332.0 698.0M355.0 691.0L362.0 698.0M362.0 691.0L355.0 698.0M424.0 691.0L431.0 698.0M431.0 691.0L424.0 698.0M447.0 691.0L454.0 698.0M454.0 691.0L447.0 698.0M481.8 691.0L488.8 698.0M488.8 691.0L481.8 698.0M504.8 691.0L511.8 698.0M511.8 691.0L504.8 698.0M677.0 691.0L684.0 698.0M684.0 691.0L677.0 698.0M711.8 691.0L718.8 698.0M718.8 691.0L711.8 698.0M746.0 691.0L753.0 698.0M753.0 691.0L746.0 698.0M804.0 691.0L811.0 698.0M811.0 691.0L804.0 698.0M56.0 756.8L63.0 763.8M63.0 756.8L56.0 763.8M79.0 756.8L86.0 763.8M86.0 756.8L79.0 763.8M91.0 756.8L98.0 763.8M98.0 756.8L91.0 763.8M102.0 756.8L109.0 763.8M109.0 756.8L102.0 763.8M159.8 756.8L166.8 763.8M166.8 756.8L159.8 763.8M206.0 756.8L213.0 763.8M213.0 756.8L206.0 763.8M251.8 756.8L258.8 763.8M258.8 756.8L251.8 763.8M298.2 756.8L305.2 763.8M305.2 756.8L298.2 763.8M504.8 756.8L511.8 763.8M511.8 756.8L504.8 763.8M643.2 756.8L650.2 763.8M650.2 756.8L643.2 763.8M677.0 756.8L684.0 763.8M684.0 756.8L677.0 763.8M746.0 756.8L753.0 763.8M753.0 756.8L746.0 763.8M758.2 756.8L765.2 763.8M765.2 756.8L758.2 763.8M873.2 756.8L880.2 763.8M880.2 756.8L873.2 763.8M194.0 759.8L201.0 766.8M201.0 759.8L194.0 766.8M286.0 759.8L293.0 766.8M293.0 759.8L286.0 766.8M447.0 759.8L454.0 766.8M454.0 759.8L447.0 766.8M504.8 759.8L511.8 766.8M511.8 759.8L504.8 766.8M711.8 759.8L718.8 766.8M718.8 759.8L711.8 766.8M746.0 759.8L753.0 766.8M753.0 759.8L746.0 766.8M804.0 759.8L811.0 766.8M811.0 759.8L804.0 766.8M159.8 779.8L166.8 786.8M166.8 779.8L159.8 786.8M274.8 779.8L281.8 786.8M281.8 779.8L274.8 786.8M332.0 779.8L339.0 786.8M339.0 779.8L332.0 786.8M355.0 779.8L362.0 786.8M362.0 779.8L355.0 786.8M424.0 779.8L431.0 786.8M431.0 779.8L424.0 786.8M447.0 779.8L454.0 786.8M454.0 779.8L447.0 786.8M481.8 779.8L488.8 786.8M488.8 779.8L481.8 786.8M504.8 779.8L511.8 786.8M511.8 779.8L504.8 786.8M274.8 731.2L281.8 738.2M281.8 731.2L274.8 738.2M504.8 726.5L511.8 733.5M511.8 726.5L504.8 733.5M217.0 825.5L224.0 832.5M224.0 825.5L217.0 832.5M274.8 823.2L281.8 830.2M281.8 823.2L274.8 830.2M286.0 828.0L293.0 835.0M293.0 828.0L286.0 835.0M447.0 825.5L454.0 832.5M454.0 825.5L447.0 832.5M504.8 814.0L511.8 821.0M511.8 814.0L504.8 821.0M677.0 814.0L684.0 821.0M684.0 814.0L677.0 821.0M677.0 825.5L684.0 832.5M684.0 825.5L677.0 832.5M711.8 828.0L718.8 835.0M718.8 828.0L711.8 835.0M746.0 828.0L753.0 835.0M753.0 828.0L746.0 835.0M804.0 825.5L811.0 832.5M811.0 825.5L804.0 832.5M873.2 657.0L880.2 664.0M880.2 657.0L873.2 664.0" stroke="#b4b4b4" fill="none" shape-rendering="auto" stroke-width="0.9"/><rect x="58.0" y="670.0" width="3" height="3" fill="#c8f4ee"/><rect x="59.0" y="671.0" width="1" height="1" fill="#183030"/><rect x="81.0" y="670.0" width="3" height="3" fill="#c8f4ee"/><rect x="82.0" y="671.0" width="1" height="1" fill="#183030"/><rect x="150.0" y="670.0" width="3" height="3" fill="#c8f4ee"/><rect x="151.0" y="671.0" width="1" height="1" fill="#183030"/><rect x="173.0" y="670.0" width="3" height="3" fill="#c8f4ee"/><rect x="174.0" y="671.0" width="1" height="1" fill="#183030"/><rect x="242.0" y="670.0" width="3" height="3" fill="#c8f4ee"/><rect x="243.0" y="671.0" width="1" height="1" fill="#183030"/><rect x="265.0" y="670.0" width="3" height="3" fill="#c8f4ee"/><rect x="266.0" y="671.0" width="1" height="1" fill="#183030"/><rect x="288.0" y="670.0" width="3" height="3" fill="#c8f4ee"/><rect x="289.0" y="671.0" width="1" height="1" fill="#183030"/><rect x="311.0" y="670.0" width="3" height="3" fill="#c8f4ee"/><rect x="312.0" y="671.0" width="1" height="1" fill="#183030"/><rect x="380.0" y="670.0" width="3" height="3" fill="#c8f4ee"/><rect x="381.0" y="671.0" width="1" height="1" fill="#183030"/><rect x="403.0" y="670.0" width="3" height="3" fill="#c8f4ee"/><rect x="404.0" y="671.0" width="1" height="1" fill="#183030"/><rect x="472.0" y="670.0" width="3" height="3" fill="#c8f4ee"/><rect x="473.0" y="671.0" width="1" height="1" fill="#183030"/><rect x="495.0" y="670.0" width="3" height="3" fill="#c8f4ee"/><rect x="496.0" y="671.0" width="1" height="1" fill="#183030"/><rect x="518.0" y="670.0" width="3" height="3" fill="#c8f4ee"/><rect x="519.0" y="671.0" width="1" height="1" fill="#183030"/><rect x="541.0" y="670.0" width="3" height="3" fill="#c8f4ee"/><rect x="542.0" y="671.0" width="1" height="1" fill="#183030"/><rect x="633.0" y="670.0" width="3" height="3" fill="#c8f4ee"/><rect x="634.0" y="671.0" width="1" height="1" fill="#183030"/><rect x="656.0" y="670.0" width="3" height="3" fill="#c8f4ee"/><rect x="657.0" y="671.0" width="1" height="1" fill="#183030"/><rect x="725.0" y="670.0" width="3" height="3" fill="#c8f4ee"/><rect x="726.0" y="671.0" width="1" height="1" fill="#183030"/><rect x="863.0" y="670.0" width="3" height="3" fill="#c8f4ee"/><rect x="864.0" y="671.0" width="1" height="1" fill="#183030"/><rect x="58.0" y="716.0" width="3" height="3" fill="#c8f4ee"/><rect x="59.0" y="717.0" width="1" height="1" fill="#183030"/><rect x="127.0" y="716.0" width="3" height="3" fill="#c8f4ee"/><rect x="128.0" y="717.0" width="1" height="1" fill="#183030"/><rect x="150.0" y="716.0" width="3" height="3" fill="#c8f4ee"/><rect x="151.0" y="717.0" width="1" height="1" fill="#183030"/><rect x="173.0" y="716.0" width="3" height="3" fill="#c8f4ee"/><rect x="174.0" y="717.0" width="1" height="1" fill="#183030"/><rect x="265.0" y="716.0" width="3" height="3" fill="#c8f4ee"/><rect x="266.0" y="717.0" width="1" height="1" fill="#183030"/><rect x="288.0" y="716.0" width="3" height="3" fill="#c8f4ee"/><rect x="289.0" y="717.0" width="1" height="1" fill="#183030"/><rect x="311.0" y="716.0" width="3" height="3" fill="#c8f4ee"/><rect x="312.0" y="717.0" width="1" height="1" fill="#183030"/><rect x="380.0" y="716.0" width="3" height="3" fill="#c8f4ee"/><rect x="381.0" y="717.0" width="1" height="1" fill="#183030"/><rect x="403.0" y="716.0" width="3" height="3" fill="#c8f4ee"/><rect x="404.0" y="717.0" width="1" height="1" fill="#183030"/><rect x="472.0" y="716.0" width="3" height="3" fill="#c8f4ee"/><rect x="473.0" y="717.0" width="1" height="1" fill="#183030"/><rect x="495.0" y="716.0" width="3" height="3" fill="#c8f4ee"/><rect x="496.0" y="717.0" width="1" height="1" fill="#183030"/><rect x="518.0" y="716.0" width="3" height="3" fill="#c8f4ee"/><rect x="519.0" y="717.0" width="1" height="1" fill="#183030"/><rect x="541.0" y="716.0" width="3" height="3" fill="#c8f4ee"/><rect x="542.0" y="717.0" width="1" height="1" fill="#183030"/><rect x="633.0" y="716.0" width="3" height="3" fill="#c8f4ee"/><rect x="634.0" y="717.0" width="1" height="1" fill="#183030"/><rect x="725.0" y="716.0" width="3" height="3" fill="#c8f4ee"/><rect x="726.0" y="717.0" width="1" height="1" fill="#183030"/><rect x="156.0" y="716.0" width="3" height="3" fill="#c8f4ee"/><rect x="157.0" y="717.0" width="1" height="1" fill="#183030"/><rect x="168.0" y="716.0" width="3" height="3" fill="#c8f4ee"/><rect x="169.0" y="717.0" width="1" height="1" fill="#183030"/><rect x="127.0" y="808.0" width="3" height="3" fill="#c8f4ee"/><rect x="128.0" y="809.0" width="1" height="1" fill="#183030"/><rect x="173.0" y="808.0" width="3" height="3" fill="#c8f4ee"/><rect x="174.0" y="809.0" width="1" height="1" fill="#183030"/><rect x="265.0" y="808.0" width="3" height="3" fill="#c8f4ee"/><rect x="266.0" y="809.0" width="1" height="1" fill="#183030"/><rect x="311.0" y="808.0" width="3" height="3" fill="#c8f4ee"/><rect x="312.0" y="809.0" width="1" height="1" fill="#183030"/><rect x="495.0" y="808.0" width="3" height="3" fill="#c8f4ee"/><rect x="496.0" y="809.0" width="1" height="1" fill="#183030"/><rect x="541.0" y="808.0" width="3" height="3" fill="#c8f4ee"/><rect x="542.0" y="809.0" width="1" height="1" fill="#183030"/><rect x="633.0" y="808.0" width="3" height="3" fill="#c8f4ee"/><rect x="634.0" y="809.0" width="1" height="1" fill="#183030"/><rect x="725.0" y="808.0" width="3" height="3" fill="#c8f4ee"/><rect x="726.0" y="809.0" width="1" height="1" fill="#183030"/><rect x="265.0" y="647.0" width="3" height="3" fill="#c8f4ee"/><rect x="266.0" y="648.0" width="1" height="1" fill="#183030"/><rect x="265.0" y="796.0" width="3" height="3" fill="#c8f4ee"/><rect x="266.0" y="797.0" width="1" height="1" fill="#183030"/><rect x="288.0" y="796.0" width="3" height="3" fill="#c8f4ee"/><rect x="289.0" y="797.0" width="1" height="1" fill="#183030"/><rect x="495.0" y="739.0" width="3" height="3" fill="#c8f4ee"/><rect x="496.0" y="740.0" width="1" height="1" fill="#183030"/><rect x="518.0" y="739.0" width="3" height="3" fill="#c8f4ee"/><rect x="519.0" y="740.0" width="1" height="1" fill="#183030"/><rect x="495.0" y="785.0" width="3" height="3" fill="#c8f4ee"/><rect x="496.0" y="786.0" width="1" height="1" fill="#183030"/><rect x="518.0" y="785.0" width="3" height="3" fill="#c8f4ee"/><rect x="519.0" y="786.0" width="1" height="1" fill="#183030"/><rect x="633.0" y="785.0" width="3" height="3" fill="#c8f4ee"/><rect x="634.0" y="786.0" width="1" height="1" fill="#183030"/><rect x="725.0" y="785.0" width="3" height="3" fill="#c8f4ee"/><rect x="726.0" y="786.0" width="1" height="1" fill="#183030"/></svg>
<div class="t" style="left:55px;top:609px;font-size:13px;color:#e0e0e0;letter-spacing:-0.25px;">front (y/z)</div>
<svg style="left:907px;top:606px" width="366" height="228" viewBox="907 606 366 228" shape-rendering="crispEdges"><path d="M909.5 606V834M936.5 606V834M963.5 606V834M991.5 606V834M1018.5 606V834M1046.5 606V834M1074.5 606V834M1101.5 606V834M1129.5 606V834M1156.5 606V834M1184.5 606V834M1212.5 606V834M1239.5 606V834M1267.5 606V834M907 611.5H1273M907 638.5H1273M907 666.5H1273M907 694.5H1273M907 721.5H1273M907 749.5H1273M907 776.5H1273M907 803.5H1273M907 831.5H1273" stroke="#666" fill="none"/><path d="M907 694.5L1273 694.5" stroke="#2060d0" stroke-width="1"/><path d="M907 749.5L1273 749.5" stroke="#2060d0" stroke-width="1"/><path d="M907 776.5L1273 776.5" stroke="#2060d0" stroke-width="1"/><path d="M907 831.5L1273 831.5" stroke="#2060d0" stroke-width="1"/><path d="M936.5 694.5L936.5 834" stroke="#2060d0" stroke-width="1"/><path d="M991.5 694.5L991.5 834" stroke="#2060d0" stroke-width="1"/><path d="M1018.5 694.5L1018.5 834" stroke="#2060d0" stroke-width="1"/><path d="M1046.5 694.5L1046.5 834" stroke="#2060d0" stroke-width="1"/><path d="M988.0 719.3L995.0 726.3M995.0 719.3L988.0 726.3M1209.0 719.0L1216.0 726.0M1216.0 719.0L1209.0 726.0M1236.0 719.0L1243.0 726.0M1243.0 719.0L1236.0 726.0M1209.0 759.8L1216.0 766.8M1216.0 759.8L1209.0 766.8M1209.0 799.8L1216.0 806.8M1216.0 799.8L1209.0 806.8M1001.5 797.0L1008.5 804.0M1008.5 797.0L1001.5 804.0M1126.0 797.3L1133.0 804.3M1133.0 797.3L1126.0 804.3M1140.0 797.3L1147.0 804.3M1147.0 797.3L1140.0 804.3M988.0 824.8L995.0 831.8M995.0 824.8L988.0 831.8M1236.0 824.8L1243.0 831.8M1243.0 824.8L1236.0 831.8" stroke="#b4b4b4" fill="none" shape-rendering="auto" stroke-width="0.9"/><rect x="935.0" y="693.0" width="3" height="3" fill="#fff"/><rect x="936.0" y="694.0" width="1" height="1" fill="#183030"/><rect x="990.0" y="693.0" width="3" height="3" fill="#fff"/><rect x="991.0" y="694.0" width="1" height="1" fill="#183030"/><rect x="1017.0" y="693.0" width="3" height="3" fill="#fff"/><rect x="1018.0" y="694.0" width="1" height="1" fill="#183030"/><rect x="1045.0" y="693.0" width="3" height="3" fill="#fff"/><rect x="1046.0" y="694.0" width="1" height="1" fill="#183030"/><rect x="935.0" y="748.0" width="3" height="3" fill="#fff"/><rect x="936.0" y="749.0" width="1" height="1" fill="#183030"/><rect x="1045.0" y="748.0" width="3" height="3" fill="#fff"/><rect x="1046.0" y="749.0" width="1" height="1" fill="#183030"/><rect x="1128.0" y="830.0" width="3" height="3" fill="#fff"/><rect x="1129.0" y="831.0" width="1" height="1" fill="#183030"/></svg>
<div class="t" style="left:908px;top:609px;font-size:13px;color:#e0e0e0;letter-spacing:-0.25px;letter-spacing:-0.1px">side (x/z)</div>
<svg style="left:54px;top:69px" width="847" height="531" viewBox="54 69 847 531"><defs>
<filter id="fgrass" x="0" y="0" width="100%" height="100%" color-interpolation-filters="sRGB"><feTurbulence type="fractalNoise" baseFrequency="0.3" numOctaves="3" seed="3"/><feColorMatrix values="0.78 0 0 0 -0.185  1.0 0 0 0 -0.095  0.62 0 0 0 -0.16  0 0 0 0 1"/></filter>
<filter id="fgrass2" x="0" y="0" width="100%" height="100%" color-interpolation-filters="sRGB"><feTurbulence type="fractalNoise" baseFrequency="0.12 0.4" numOctaves="2" seed="5"/><feColorMatrix values="0.4 0 0 0 0.02  0.7 0 0 0 0.15  0.3 0 0 0 -0.02  0 0 0 0 1"/></filter>
<filter id="fwall" x="0" y="0" width="100%" height="100%" color-interpolation-filters="sRGB"><feTurbulence type="fractalNoise" baseFrequency="0.09 0.07" numOctaves="3" seed="8"/><feColorMatrix values="0 0 0 0 0.55  0 0 0 0 0.46  0 0 0 0 0.40  -3.0 0 0 0 1.7"/></filter>
<filter id="fwall2" x="0" y="0" width="100%" height="100%" color-interpolation-filters="sRGB"><feTurbulence type="fractalNoise" baseFrequency="0.09 0.07" numOctaves="3" seed="4"/><feColorMatrix values="0 0 0 0 0.36  0 0 0 0 0.30  0 0 0 0 0.24  -3.0 0 0 0 1.7"/></filter>
<filter id="fasph" x="0" y="0" width="100%" height="100%" color-interpolation-filters="sRGB"><feTurbulence type="fractalNoise" baseFrequency="0.02 0.04" numOctaves="3" seed="2"/><feColorMatrix values="0 0 0 0 0.12  0 0 0 0 0.12  0 0 0 0 0.16  -2 0 0 0 1.2"/></filter>
<linearGradient id="ggr" x1="0" y1="384" x2="0" y2="520" gradientUnits="userSpaceOnUse"><stop offset="0" stop-color="#3d7a28" stop-opacity="0.9"/><stop offset="0.5" stop-color="#3a7628" stop-opacity="0.6"/><stop offset="1" stop-color="#367026" stop-opacity="0"/></linearGradient>
<clipPath id="cgr1"><polygon points="556,600 594,529 656,422 700,419 836,391 901,384 901,600"/></clipPath>
<clipPath id="cfac"><polygon points="339.6,403.3 609,275.4 609.3,307 631.2,312.3 607,332.4 354,523.3"/></clipPath>
</defs><polygon points="54.0,347.0 75.0,342.0 140.0,380.0 420.0,330.0 829.0,266.0 901.0,271.5 901.0,600.0 54.0,600.0" fill="#404149" /><rect x="54" y="330" width="847" height="270" filter="url(#fasph)" opacity="0.22"/><polygon points="827.3,266.0 901.8,271.8 901.8,336.7 832.9,327.1 839.6,295.6" fill="#3f4047" /><polygon points="54.0,330.0 62.9,328.4 110.7,319.6 128.4,373.3 118.4,366.7 98.4,353.3 76.2,341.1 54.0,347.1" fill="#45852d" /><polygon points="54.0,330.0 62.9,328.9 76.2,341.1 54.0,347.1" fill="#8d8f88" /><polygon points="98.4,353.3 120.7,351.1 125.1,364.4 117.3,365.6" fill="#7f857c" /><polygon points="607.3,307.8 660.7,313.3 831.8,327.8 834.0,338.9 658.4,343.8 614.0,335.6 607.3,331.1" fill="#27272c" /><polygon points="609.6,317.8 661.8,314.4 659.6,343.3 607.3,332.2" fill="#68706a" /><polygon points="658.4,343.3 832.9,338.9 901.8,347.8 901.8,351.6 836.2,351.1 751.8,362.2 624.0,385.6" fill="#3f7b25" /><polygon points="698.4,420.0 836.2,391.1 901.8,384.4 901.8,420.0" fill="#3a7526" /><polygon points="556.0,600.0 594.0,529.0 656.0,422.0 700.0,419.0 836.0,391.0 901.0,384.0 901.0,600.0" fill="#2f6a25" /><g clip-path="url(#cgr1)"><rect x="540" y="380" width="370" height="225" filter="url(#fgrass)"/><rect x="540" y="380" width="370" height="225" fill="url(#ggr)"/></g><polygon points="831.8,326.7 901.8,336.0 901.8,347.8 834.0,331.8" fill="#55524e" /><polygon points="608.0,270.7 614.0,271.6 685.1,278.9 839.6,295.6 834.0,331.8 831.8,327.8 660.7,313.3 608.0,305.8" fill="#4b4946" /><polygon points="608.0,272.9 644.7,278.7 669.6,281.1 668.4,305.6 608.0,295.6" fill="#55534f" /><polygon points="608.0,272.9 644.7,278.7 622.4,296.7 608.0,294.7" fill="#6c6a66" /><polygon points="607.3,296.7 668.2,302.9 668.2,307.8 607.3,304.9" fill="#5c554b" /><polygon points="600.7,270.0 600.7,260.0 608.0,259.1 629.3,257.6 669.6,242.2 687.3,235.6 714.0,236.7 695.1,250.0 826.2,261.1 839.6,295.6 685.1,278.9 614.0,271.6" fill="#716d6b" /><path d="M668.4 286.7 L668.4 307.8" stroke="#8a867c" stroke-width="0.8" fill="none"/><path d="M685.1 286.7 L681.8 304.4 L740.7 312.2 L740.7 317.8" stroke="#9a968c" stroke-width="0.8" fill="none"/><path d="M756.2 315.6 L814.0 323.3 L816.2 293.3" stroke="#9a968c" stroke-width="0.8" fill="none"/><polygon points="107.4,301.4 400.0,252.8 458.1,244.4 498.2,249.4 591.1,256.2 609.0,261.2 609.0,275.4 340.0,402.7 224.6,351.8 187.6,320.4 161.2,323.3" fill="#b98a50" /><polygon points="107.4,301.4 184.4,288.7 302.7,268.6 400.0,252.8 458.1,244.4 498.2,249.4 591.1,256.2 609.0,261.2 609.0,268.0 591.1,264.8 464.4,257.4 380.0,275.4 341.7,275.4 302.7,270.1 303.7,285.3 271.0,301.4 229.2,302.4 184.4,291.2 188.7,300.7 152.8,314.9 112.7,303.0" fill="#6d7982" /><polygon points="380.0,271.2 464.4,253.6 591.1,261.7 609.0,266.3 609.0,273.3 527.8,269.7 464.4,262.1 380.0,276.4" fill="#5e5c28" /><polygon points="341.7,275.4 400.0,264.8 400.0,271.8 342.8,282.8" fill="#6e6a2c" /><polygon points="141.2,304.9 162.3,301.8 163.3,311.3 145.4,314.4" fill="#05070a" /><polygon points="143.3,310.7 162.8,307.6 163.3,311.3 145.4,314.4" fill="#3a8a2a" /><polygon points="247.8,285.3 261.5,283.8 262.6,299.7 248.8,300.7" fill="#05070a" /><polygon points="248.3,294.1 262.0,292.8 262.6,299.7 248.8,300.7" fill="#3a8a2a" /><polygon points="281.5,280.0 293.2,278.6 294.2,293.3 282.6,294.4" fill="#05070a" /><polygon points="282.1,288.3 293.7,287.0 294.2,293.3 282.6,294.4" fill="#3a8a2a" /><polygon points="335.4,270.1 344.9,269.1 344.9,274.3 336.0,275.0" fill="#05070a" /><polygon points="367.0,264.8 374.4,263.8 374.4,269.1 367.0,269.7" fill="#05070a" /><polygon points="439.1,251.1 445.4,250.5 445.4,255.3 439.1,255.8" fill="#05070a" /><polygon points="183.4,290.2 229.2,302.4 229.2,313.4 161.2,323.3 151.7,314.9 188.7,300.7" fill="#d4954f" /><polygon points="184.4,291.6 221.4,302.2 192.9,307.7 188.7,300.7" fill="#a86c34" /><polygon points="189.7,320.4 229.2,312.3 229.2,302.8 271.0,301.8 276.3,334.5 247.8,342.9" fill="#d8c2a6" /><polygon points="272.0,301.4 323.3,290.2 382.9,303.5 339.6,316.6" fill="#6f7878" /><polygon points="271.0,301.8 339.6,316.6 276.3,334.9" fill="#b07a40" /><polygon points="307.9,300.7 321.7,299.2 322.7,309.2 311.1,310.6" fill="#6a3a30" /><polygon points="312.2,302.8 319.5,302.0 320.2,307.1 313.2,307.9" fill="#9a9a94" /><polygon points="302.7,269.1 341.7,275.4 342.8,282.8 323.3,290.2" fill="#b07a40" /><polygon points="323.3,290.2 342.8,282.8 400.0,271.8 400.0,302.8 383.9,303.5" fill="#d4985a" /><polygon points="380.0,274.3 401.1,273.3 458.1,261.7 515.1,270.1 540.4,271.2 561.5,271.2 591.1,270.1 608.0,275.4 574.2,287.0 525.7,311.3 460.2,297.6 432.8,293.3 380.0,310.2" fill="#d4954f" /><polygon points="401.1,273.3 458.1,261.7 458.1,280.7 432.8,293.3 401.1,299.7" fill="#b07a44" /><polygon points="380.0,274.8 401.1,273.7 401.1,299.7 380.0,304.3" fill="#d09a5c" /><polygon points="465.5,268.0 475.0,269.1 475.0,280.7 465.5,280.2" fill="#5a5040" /><polygon points="514.1,280.7 570.0,288.1 526.7,311.3 514.1,307.1" fill="#b07a44" /><polygon points="541.5,271.2 541.5,282.8 570.0,288.1 561.5,281.7 562.0,271.6" fill="#b07a44" /><polygon points="287.9,335.6 400.0,303.3 432.8,293.3 515.1,270.1 527.8,272.2 460.2,291.6 525.7,311.3 468.7,337.7 432.8,329.2 380.0,345.1 382.9,345.1 347.0,338.7 318.5,345.7" fill="#38222d" /><polygon points="432.8,293.3 515.1,270.1 527.8,272.2 449.7,293.3" fill="#2e1c28" /><polygon points="384.2,316.6 425.4,304.9 425.4,322.9 384.2,336.6" fill="#6c8c8a" /><polygon points="383.9,320.8 400.0,315.5 400.0,333.4 385.0,336.6" fill="#6c8c8a" /><polygon points="358.6,326.1 372.3,322.9 374.4,337.7 360.7,339.8" fill="#7a5a48" /><polygon points="362.8,329.2 369.2,327.7 370.2,334.5 363.9,336.0" fill="#9a9a94" /><polygon points="433.8,301.8 449.7,306.0 449.7,329.2 433.8,327.1" fill="#2c1a14" /><polygon points="382.9,345.1 400.0,339.8 400.0,354.6 386.3,345.1 432.8,329.2 468.7,337.7 441.2,350.3 432.8,356.7 411.7,354.6" fill="#a9a999" /><polygon points="441.2,337.7 464.4,338.7 441.2,350.3" fill="#3a3222" /><polygon points="226.7,352.4 281.5,336.6 317.4,345.7 268.9,363.4" fill="#b8a07a" /><polygon points="235.1,350.3 281.5,337.7 283.7,354.6 266.8,363.4" fill="#40242e" /><polygon points="224.6,351.8 235.1,350.3 266.8,363.4 340.7,397.8 340.0,403.1" fill="#d4954f" /><polygon points="268.9,363.0 347.0,339.8 400.0,354.6 400.0,375.7 340.7,398.9" fill="#cf9a58" /><polygon points="348.0,340.8 400.0,355.6 400.0,375.7 353.3,387.3" fill="#7a5632" /><polygon points="380.0,348.2 418.0,359.2 380.0,377.8" fill="#b8803f" /><path d="M108.4 302.2 L161.2 323.3" stroke="#e0a05a" stroke-width="2.6" fill="none" stroke-linejoin="miter"/><path d="M187.6 320.4 L247.8 344.0 L224.6 352.0" stroke="#e0a05a" stroke-width="2.6" fill="none" stroke-linejoin="miter"/><path d="M224.6 352.0 L281.5 336.6 L317.4 345.7 L347.0 338.7 L400.0 353.5" stroke="#e0a05a" stroke-width="2.6" fill="none" stroke-linejoin="miter"/><path d="M285.8 335.6 L400.0 302.2" stroke="#e0a05a" stroke-width="2.4" fill="none" stroke-linejoin="miter"/><path d="M271.0 301.8 L323.3 290.0 L382.9 303.5 L339.6 316.6 L271.0 301.8" stroke="#e0a05a" stroke-width="2.0" fill="none" stroke-linejoin="miter"/><path d="M302.7 269.3 L341.7 275.4" stroke="#e0a05a" stroke-width="2" fill="none" stroke-linejoin="miter"/><path d="M340.0 402.7 L609.0 275.8" stroke="#e0a05a" stroke-width="3" fill="none" stroke-linejoin="miter"/><path d="M380.0 348.2 L420.1 359.8" stroke="#e0a05a" stroke-width="2.4" fill="none" stroke-linejoin="miter"/><path d="M432.8 293.3 L525.7 311.3" stroke="#e0a05a" stroke-width="2.4" fill="none" stroke-linejoin="miter"/><path d="M460.2 297.6 L515.1 280.7 L570.0 288.5" stroke="#e0a05a" stroke-width="2.2" fill="none" stroke-linejoin="miter"/><path d="M380.0 274.8 L401.1 273.3 L458.1 261.7 L515.1 270.1 L591.1 270.1" stroke="#e0a05a" stroke-width="2" fill="none" stroke-linejoin="miter"/><polygon points="107.4,301.8 161.2,323.3 179.2,407.3 127.4,373.6" fill="#82715c" /><polygon points="161.2,323.9 188.7,320.8 199.2,360.9 169.7,366.2" fill="#d8c2a6" /><polygon points="169.7,368.3 201.3,381.6 205.6,402.0 179.2,407.7" fill="#d8c2a6" /><polygon points="167.6,356.2 199.2,360.9 229.8,375.7 229.8,387.9 169.7,368.7" fill="#8e8676" /><polygon points="187.6,320.4 247.8,343.4 224.6,351.8 229.8,387.9 229.8,375.7 199.2,360.9" fill="#7e705e" /><polygon points="201.3,382.0 229.8,388.3 235.1,415.8 209.8,407.7" fill="#86806e" /><polygon points="208.7,390.4 218.2,393.6 220.3,409.4 210.8,406.3" fill="#4a6a4c" /><polygon points="224.6,398.9 234.1,401.4 234.7,407.3 225.0,404.8" fill="#4a6a4c" /><polygon points="179.2,407.7 205.6,401.4 235.1,415.8 238.4,420.0 242.9,444.4 209.6,426.7" fill="#78908a" /><polygon points="224.6,351.8 340.0,402.7 354.0,523.3 240.7,435.6 238.4,420.0 235.1,415.8" fill="#82715c" /><clipPath id="clw"><polygon points="107.4,301.8 161.2,323.3 179.2,407.3 127.4,373.6"/><polygon points="224.6,351.8 340.0,402.7 354.0,523.3 240.7,435.6 238.4,420.0 235.1,415.8"/><polygon points="187.6,320.4 247.8,343.4 224.6,351.8 229.8,387.9 229.8,375.7 199.2,360.9"/></clipPath><g clip-path="url(#clw)"><rect x="100" y="290" width="260" height="240" filter="url(#fwall2)" opacity="0.5"/></g><polygon points="339.6,403.3 609.0,275.4 609.3,307.0 631.2,312.3 607.0,332.4 354.0,523.3" fill="#d9c3a3" /><g clip-path="url(#cfac)"><rect x="335" y="270" width="300" height="260" filter="url(#fwall)" opacity="0.5"/></g><path d="M339.6 403.3 L609.0 275.4" stroke="#e0a05a" stroke-width="2.6" fill="none" stroke-linejoin="miter"/><polygon points="467.6,354.6 479.2,350.8 479.2,373.6 467.6,378.8" fill="#1f4a36" /><polygon points="467.6,354.6 476.4,351.7 476.4,372.5 467.6,376.4" fill="#6a8680" /><polygon points="507.7,335.6 518.3,332.4 518.3,351.4 507.7,356.2" fill="#1f4a36" /><polygon points="507.7,335.6 515.7,333.1 515.7,350.6 507.7,354.2" fill="#6a8680" /><polygon points="506.7,375.7 517.2,371.9 517.2,390.9 506.7,396.8" fill="#1f4a36" /><polygon points="506.7,375.7 514.7,372.8 514.7,390.3 506.7,394.7" fill="#6a8680" /><polygon points="541.5,353.5 549.9,350.8 549.9,366.8 541.5,371.4" fill="#1f4a36" /><polygon points="541.5,353.5 547.9,351.4 547.9,366.3 541.5,369.6" fill="#6a8680" /><polygon points="575.3,331.3 581.6,329.2 581.6,351.4 575.3,354.6" fill="#1f4a36" /><polygon points="575.3,331.3 580.1,329.7 580.1,349.9 575.3,352.2" fill="#6a8680" /><polygon points="587.9,319.7 594.3,318.0 594.3,339.8 587.9,342.3" fill="#1f4a36" /><polygon points="587.9,319.7 592.8,318.4 592.8,338.2 587.9,340.0" fill="#6a8680" /><polygon points="467.6,402.0 480.3,396.8 480.3,415.8 467.6,420.0" fill="#1f4a36" /><polygon points="467.6,402.0 477.2,398.0 477.2,414.9 467.6,418.2" fill="#6a8680" /><polygon points="544.7,315.5 554.2,312.3 554.2,329.2 544.7,333.4" fill="#a9a49c" /><polygon points="594.3,289.1 599.5,287.4 599.5,301.8 594.3,303.9" fill="#a9a49c" /><polygon points="407.3,442.2 426.2,432.2 427.3,454.4 408.4,467.8" fill="#1f4a36" /><polygon points="407.3,442.2 421.7,434.6 422.7,455.3 408.3,465.2" fill="#6a8680" /><polygon points="467.6,376.7 479.2,371.9 479.6,374.0 468.0,379.0" fill="#f0f0ea" /><polygon points="507.7,354.6 518.3,349.9 518.7,352.0 508.1,356.7" fill="#f0f0ea" /><polygon points="544.7,331.8 554.2,327.7 554.6,329.9 545.1,333.9" fill="#f0f0ea" /><polygon points="594.3,302.6 599.5,300.7 599.8,302.4 594.5,304.3" fill="#f0f0ea" /><polygon points="403.2,386.2 424.3,378.8 424.3,405.2 404.3,414.7" fill="#d4904a" /></svg>
<div class="t" style="left:56px;top:72px;font-size:13px;color:#e0e0e0;letter-spacing:-0.25px;letter-spacing:0.1px">camera</div>
<div class="a " style="left:1290px;top:68px;width:1px;height:783px;background:#fff"></div>
<div class="a " style="left:1291px;top:69px;width:149px;height:1px;background:#fff"></div>
<div class="t" style="left:1295px;top:73px;font-size:11px;color:#000;letter-spacing:-0.25px;">Texture group:</div>
<div class="a sunken" style="left:1300px;top:87px;width:137px;height:20px;background:#fff"></div>
<div class="a raised" style="left:1419px;top:89px;width:16px;height:16px;"></div>
<svg style="left:1419px;top:89px" width="16" height="16"><polygon points="4,6.5 11,6.5 7.5,10.0" fill="#000"/></svg>
<div class="t" style="left:1304px;top:92px;width:112px;overflow:hidden;font-size:11px;letter-spacing:-0.25px">c:\programfiler\valve\valve</div>
<div class="t" style="left:1295px;top:111px;font-size:11px;color:#000;letter-spacing:-0.25px;">Current texture:</div>
<div class="a sunken" style="left:1300px;top:124px;width:137px;height:21px;background:#fff"></div>
<div class="a raised" style="left:1419px;top:126px;width:16px;height:17px;"></div>
<svg style="left:1419px;top:126px" width="16" height="17"><polygon points="4,7.0 11,7.0 7.5,10.5" fill="#000"/></svg>
<div class="t" style="left:1307px;top:129px;width:109px;overflow:hidden;font-size:11px;letter-spacing:-0.25px">-1CSTRIKE_MR2DR</div>
<div class="a " style="left:1300px;top:151px;width:74px;height:80px;background:#dbc3a3;box-shadow:inset 1px 1px #808080,inset -1px -1px #fff"></div>
<svg style="left:1301px;top:152px" width="72" height="78" viewBox="0 0 72 78"><defs><filter id="ftex" x="0" y="0" width="100%" height="100%" color-interpolation-filters="sRGB"><feTurbulence type="fractalNoise" baseFrequency="0.6" numOctaves="2" seed="11"/><feColorMatrix values="0 0 0 0 0.45  0 0 0 0 0.36  0 0 0 0 0.28  -2.4 0 0 0 1.35"/></filter><filter id="fbl" x="-30%" y="-30%" width="160%" height="160%"><feGaussianBlur stdDeviation="3.2"/></filter></defs>
<rect width="72" height="78" fill="#dcc5a6"/>
<g filter="url(#fbl)" fill="#8c7560" opacity="0.62"><ellipse cx="22" cy="14" rx="17" ry="6" transform="rotate(28 22 14)"/><ellipse cx="8" cy="34" rx="5" ry="16"/><ellipse cx="54" cy="60" rx="6" ry="8" transform="rotate(-35 54 60)"/><ellipse cx="68" cy="12" rx="4" ry="9"/><ellipse cx="8" cy="70" rx="7" ry="5"/><ellipse cx="64" cy="48" rx="5" ry="3"/></g>
<rect width="72" height="78" filter="url(#ftex)" opacity="0.55"/></svg>
<div class="t" style="left:1379px;top:155px;font-size:11px;color:#000;letter-spacing:-0.25px;">128x128</div>
<div class="a " style="left:1378px;top:180px;width:60px;height:22px;background:#000"></div>
<div class="a raised" style="left:1379px;top:181px;width:58px;height:20px;"></div>
<div class="t" style="left:1378px;top:185px;width:60px;text-align:center;font-size:11px;letter-spacing:-0.25px;text-indent:0px"><span class="u">B</span>rowse...</div>
<div class="a raised" style="left:1378px;top:208px;width:60px;height:22px;"></div>
<div class="t" style="left:1378px;top:213px;width:60px;text-align:center;font-size:11px;letter-spacing:-0.25px;text-indent:0px"><span class="u">R</span>eplace...</div>
<div class="a " style="left:1292px;top:237px;width:148px;height:1px;background:#808080"></div>
<div class="a " style="left:1292px;top:238px;width:148px;height:1px;background:#fff"></div>
<div class="t" style="left:1295px;top:243px;font-size:11px;color:#000;letter-spacing:-0.25px;">VisGroups:</div>
<div class="a sunken" style="left:1295px;top:256px;width:141px;height:140px;background:#fff"></div>
<div class="t" style="left:1311px;top:260px;font-size:11px;color:#000;letter-spacing:-0.25px;">1 object</div>
<div class="t" style="left:1311px;top:275px;font-size:11px;color:#000;letter-spacing:-0.25px;">5 objects</div>
<div class="t" style="left:1311px;top:290px;font-size:11px;color:#000;letter-spacing:-0.25px;">269 objects</div>
<svg style="left:1299px;top:277px" width="10" height="9" viewBox="0 0 10 9"><path d="M0 2.5h1.5v-1h5.5v1h2.5v1.5h-3.5v0.8h2v1h-2v0.8h1.5v1h-3.5l-2.5-1.2h-1.5z" fill="#000"/></svg>
<svg style="left:1299px;top:292px" width="10" height="9" viewBox="0 0 10 9"><path d="M0 2.5h1.5v-1h5.5v1h2.5v1.5h-3.5v0.8h2v1h-2v0.8h1.5v1h-3.5l-2.5-1.2h-1.5z" fill="#000"/></svg>
<div class="a raised" style="left:1295px;top:399px;width:33px;height:23px;"></div>
<div class="t" style="left:1295px;top:405px;width:33px;text-align:center;font-size:11px;letter-spacing:-0.25px;text-indent:0px"><span class="u">A</span>pply</div>
<div class="a " style="left:1331px;top:399px;width:33px;height:23px;background:#000"></div>
<div class="a raised" style="left:1332px;top:400px;width:31px;height:21px;"></div>
<div class="t" style="left:1331px;top:405px;width:33px;text-align:center;font-size:11px;letter-spacing:-0.25px;text-indent:0px"><span class="u">E</span>dit</div>
<div class="a raised" style="left:1367px;top:399px;width:33px;height:23px;"></div>
<div class="t" style="left:1367px;top:405px;width:33px;text-align:center;font-size:11px;letter-spacing:-0.25px;text-indent:0px"><span class="u">M</span>ark</div>
<div class="a raised" style="left:1403px;top:399px;width:33px;height:23px;"></div>
<div class="t" style="left:1403px;top:405px;width:33px;text-align:center;font-size:11px;letter-spacing:-0.25px;text-indent:0px"><span class="u">P</span>urge</div>
<div class="a " style="left:1292px;top:425px;width:148px;height:1px;background:#808080"></div>
<div class="a " style="left:1292px;top:426px;width:148px;height:1px;background:#fff"></div>
<div class="t" style="left:1294px;top:430px;font-size:11px;color:#000;letter-spacing:-0.25px;">Move</div>
<div class="t" style="left:1294px;top:443px;font-size:11px;color:#000;letter-spacing:-0.25px;">selected:</div>
<div class="a raised" style="left:1340px;top:430px;width:48px;height:22px;"></div>
<div class="t" style="left:1340px;top:435px;width:48px;text-align:center;font-size:11px;letter-spacing:-0.25px;text-indent:0px">to<span class="u">W</span>orld</div>
<div class="a raised" style="left:1390px;top:430px;width:48px;height:22px;"></div>
<div class="t" style="left:1390px;top:435px;width:48px;text-align:center;font-size:11px;letter-spacing:-0.25px;text-indent:0px">to<span class="u">E</span>ntity</div>
<div class="t" style="left:1294px;top:460px;font-size:11px;color:#000;letter-spacing:-0.25px;"><span class="u">C</span>ategories:</div>
<div class="a sunken" style="left:1294px;top:474px;width:142px;height:20px;background:#fff"></div>
<div class="a raised" style="left:1418px;top:476px;width:16px;height:16px;"></div>
<svg style="left:1418px;top:476px" width="16" height="16"><polygon points="4,6.5 11,6.5 7.5,10.0" fill="#000"/></svg>
<div class="t" style="left:1294px;top:499px;font-size:11px;color:#000;letter-spacing:-0.25px;"><span class="u">O</span>bjects:</div>
<div class="a sunken" style="left:1294px;top:513px;width:142px;height:20px;background:#fff"></div>
<div class="a raised" style="left:1418px;top:515px;width:16px;height:16px;"></div>
<svg style="left:1418px;top:515px" width="16" height="16"><polygon points="4,6.5 11,6.5 7.5,10.0" fill="#000"/></svg>
<div class="t" style="left:1297px;top:544px;font-size:11px;color:#000;letter-spacing:-0.25px;"><span class="u">F</span>aces:</div>
<div class="a sunken" style="left:1334px;top:539px;width:35px;height:23px;background:#d4d0c8"></div>
<div class="t" style="left:1339px;top:544px;font-size:11px;color:#808080;letter-spacing:-0.25px;">0</div>
<div class="a raised" style="left:1369px;top:539px;width:16px;height:11px;"></div>
<div class="a raised" style="left:1369px;top:551px;width:16px;height:11px;"></div>
<svg style="left:1369px;top:539px" width="16" height="23"><polygon points="5,7 10,7 7.5,4" fill="#808080"/><polygon points="5,16 10,16 7.5,19" fill="#808080"/></svg>
<div class="a raised" style="left:1312px;top:565px;width:107px;height:23px;"></div>
<div class="t" style="left:1312px;top:571px;width:107px;text-align:center;font-size:11px;letter-spacing:-0.25px;text-indent:0px"><span class="u">C</span>reate Prefab</div>
<div class="a " style="left:1292px;top:590px;width:148px;height:1px;background:#808080"></div>
<div class="a " style="left:1292px;top:591px;width:148px;height:1px;background:#fff"></div>
<div class="a " style="left:0px;top:852px;width:1440px;height:1px;background:#fff"></div>
<div class="t" style="left:2px;top:857px;font-size:11px;color:#000;letter-spacing:-0.25px;">For Help, press F1</div>
<div class="a sunk1" style="left:787px;top:854px;width:204px;height:16px;"></div>
<div class="t" style="left:790px;top:857px;font-size:11px;color:#000;letter-spacing:-0.25px;">no selection.</div>
<div class="a sunk1" style="left:994px;top:854px;width:106px;height:16px;"></div>
<div class="t" style="left:997px;top:857px;font-size:11px;color:#000;letter-spacing:-0.25px;">@-672, 96</div>
<div class="a sunk1" style="left:1103px;top:854px;width:105px;height:16px;"></div>
<div class="a sunk1" style="left:1211px;top:854px;width:85px;height:16px;"></div>
<div class="a sunk1" style="left:1299px;top:854px;width:139px;height:16px;"></div>
<div class="t" style="left:1302px;top:857px;font-size:11px;color:#000;letter-spacing:-0.25px;">Snap: On Grid: 16</div>
<div class="a " style="left:0px;top:871px;width:1440px;height:1px;background:#d4d0c8"></div>
<div class="a " style="left:0px;top:872px;width:1440px;height:1px;background:#fff"></div>
<div class="a raised" style="left:2px;top:874px;width:53px;height:22px;"></div>
<svg style="left:5px;top:877px" width="16" height="16" viewBox="0 0 16 16"><path d="M1 3.5q3-2 6-0.5v5q-3-1.5-6 0.5z" fill="#e8452c"/><path d="M8 3q3 1.5 6-0.5v5q-3 2-6 0.5z" fill="#5cb531"/><path d="M1 9.5q3-2 6-0.5v5q-3-1.5-6 0.5z" fill="#3a7be0"/><path d="M8 9q3 1.5 6-0.5v5q-3 2-6 0.5z" fill="#f5b81c"/></svg>
<div class="t" style="left:22px;top:878px;font-size:12px;color:#000;font-weight:bold;">Start</div>
<svg style="left:61px;top:876px" width="70" height="18" viewBox="0 0 70 18">
<rect x="1" y="1" width="16" height="16" rx="2" fill="#222"/><path d="M4 4l3 4h4l3-4l-1 7l-4 4l-4-4z" fill="#ddd"/>
<rect x="24" y="2" width="14" height="14" rx="3" fill="#2a78d0"/><path d="M27 6h8v6h-8z" fill="#e8f0ff"/><path d="M28 9l2 2l4-4" stroke="#2a78d0" fill="none"/>
<circle cx="51" cy="6" r="3" fill="#3aa0d8"/><path d="M46 15q0-6 5-6t5 6z" fill="#3aa0d8"/><circle cx="58" cy="7" r="3" fill="#58b848"/><path d="M53 16q0-6 5-6t5 6z" fill="#58b848"/>
</svg>
<div class="t" style="left:135px;top:874px;font-size:12px;color:#000;font-weight:bold;">&raquo;</div>
<div class="a raised" style="left:149px;top:874px;width:116px;height:22px;"></div>
<svg style="left:153px;top:877px" width="16" height="16" viewBox="0 0 16 16"><path d="M2 12l9-9l3 3l-9 9z" fill="#8a6a3a"/><path d="M9 1l-3 7h3l-2 7l6-9h-3l2-5z" fill="#f5b020" stroke="#7a4a10" stroke-width="0.5"/></svg>
<div class="t" style="left:172px;top:880px;font-size:11px;color:#000;letter-spacing:-0.25px;">1. Armin van Bu...</div>
<div class="a track" style="left:267px;top:874px;width:116px;height:22px;box-shadow:inset 1px 1px #404040,inset -1px -1px #fff,inset 2px 2px #808080"></div>
<svg style="left:271px;top:877px" width="16" height="16" viewBox="0 0 16 16"><circle cx="8" cy="8.5" r="7" fill="#1018a0"/><circle cx="5" cy="5" r="1.6" fill="#2838d8"/><circle cx="11" cy="11" r="1.8" fill="#2838d8"/><path d="M5 2.2L8.2 1L9 3.2L7.2 4L10.2 12.2L8.8 12.8L5.8 4.6L4.4 5.2Z" fill="#30e030"/></svg>
<div class="t" style="left:290px;top:880px;font-size:12px;color:#000;font-weight:bold;">Valve Hamme...</div>
<div class="a raised" style="left:387px;top:874px;width:116px;height:22px;"></div>
<svg style="left:391px;top:877px" width="16" height="16" viewBox="0 0 16 16"><rect x="2" y="1" width="11" height="8" fill="#1a2a9a"/><rect x="4" y="2" width="2" height="5" fill="#fff"/><rect x="8" y="2" width="2" height="5" fill="#fff"/><rect x="1" y="9" width="6" height="6" fill="#e01818"/><circle cx="11" cy="12" r="3.2" fill="#f5d020"/><path d="M11 12l3-1.5v3z" fill="#d4d0c8"/></svg>
<div class="t" style="left:410px;top:880px;font-size:11px;color:#000;letter-spacing:-0.25px;">mIRC</div>
<div class="a raised" style="left:507px;top:874px;width:116px;height:22px;"></div>
<svg style="left:511px;top:877px" width="16" height="16" viewBox="0 0 16 16"><path d="M1 6l4-4h6l4 4v2h-14z" fill="#e8c840"/><rect x="3" y="5" width="10" height="8" fill="#38a8a0" stroke="#145" stroke-width="0.6"/><circle cx="8" cy="9" r="2.5" fill="#4ad048"/><rect x="5" y="13" width="6" height="2" fill="#555"/></svg>
<div class="t" style="left:530px;top:880px;font-size:11px;color:#000;letter-spacing:-0.25px;">ftp://192.168.1...</div>
<div class="a raised" style="left:627px;top:874px;width:116px;height:22px;"></div>
<svg style="left:631px;top:877px" width="16" height="16" viewBox="0 0 16 16"><path d="M1 4h5l1.5 1.5h7.5v8.5h-14z" fill="#f0d050" stroke="#a88820" stroke-width="0.7"/><path d="M1 7h14v7h-14z" fill="#f8e070" stroke="#a88820" stroke-width="0.7"/></svg>
<div class="t" style="left:650px;top:880px;font-size:11px;color:#000;letter-spacing:-0.25px;">maps</div>
<div class="a raised" style="left:746px;top:874px;width:116px;height:22px;"></div>
<svg style="left:750px;top:877px" width="16" height="16" viewBox="0 0 16 16"><rect x="0.5" y="2" width="15" height="12" fill="#000"/><rect x="0.5" y="2" width="15" height="2.5" fill="#2a4ab0"/><text x="2" y="12" font-size="6" fill="#fff" font-family="Liberation Mono" font-weight="bold">C:\</text></svg>
<div class="t" style="left:769px;top:880px;font-size:11px;color:#000;letter-spacing:-0.25px;">C:\WINDOWS\s...</div>
<div class="a raised" style="left:866px;top:874px;width:116px;height:22px;"></div>
<svg style="left:870px;top:877px" width="16" height="16" viewBox="0 0 16 16"><rect x="4" y="1" width="10" height="13" fill="#fff" stroke="#88a" stroke-width="0.6"/><circle cx="7" cy="9" r="5" fill="none" stroke="#2a78d8" stroke-width="2.2"/><path d="M2 9h10" stroke="#2a78d8" stroke-width="1.6"/><path d="M1 6q6-6 13-3" stroke="#f0c020" fill="none" stroke-width="1"/></svg>
<div class="t" style="left:889px;top:880px;font-size:11px;color:#000;letter-spacing:-0.25px;">CS-Maps.Org W...</div>
<div class="a raised" style="left:986px;top:874px;width:116px;height:22px;"></div>
<svg style="left:990px;top:877px" width="16" height="16" viewBox="0 0 16 16"><path d="M1 4h5l1.5 1.5h7.5v8.5h-14z" fill="#f0d050" stroke="#a88820" stroke-width="0.7"/><path d="M1 7h14v7h-14z" fill="#f8e070" stroke="#a88820" stroke-width="0.7"/></svg>
<div class="t" style="left:1009px;top:880px;font-size:11px;color:#000;letter-spacing:-0.25px;">etx2geier</div>
<div class="a raised" style="left:1106px;top:874px;width:116px;height:22px;"></div>
<svg style="left:1110px;top:877px" width="16" height="16" viewBox="0 0 16 16"><ellipse cx="8" cy="9" rx="4.5" ry="6" fill="#111"/><ellipse cx="8" cy="10.5" rx="2.8" ry="4" fill="#fff"/><circle cx="8" cy="4" r="2.6" fill="#111"/><path d="M6.8 5l1.2 1.5l1.2-1.5z" fill="#f0b020"/><path d="M3 14.5h4v1h-4zM9 14.5h4v1h-4z" fill="#f0b020"/></svg>
<div class="t" style="left:1129px;top:880px;font-size:11px;color:#000;letter-spacing:-0.25px;">Explore2fs</div>
<div class="a " style="left:1234px;top:878px;width:13px;height:15px;background:#0a2a7a"></div>
<div class="t" style="left:1235px;top:880px;font-size:10px;color:#fff;letter-spacing:-0.25px;">NC</div>
<div class="a sunk1" style="left:1250px;top:874px;width:188px;height:23px;"></div>
<svg style="left:1252px;top:876px" width="146" height="19" viewBox="0 0 146 19">
<rect x="2" y="4" width="9" height="7" fill="#4a5a9a"/><rect x="6" y="8" width="9" height="7" fill="#7a8ac0"/><path d="M11 11l6 6M17 11l-6 6" stroke="#e01010" stroke-width="2"/>
<circle cx="28" cy="9.5" r="6.5" fill="#e03030"/><circle cx="28" cy="9.5" r="3.5" fill="#f8d8d8"/><path d="M26 7.5l4 4M30 7.5l-4 4" stroke="#e03030" stroke-width="1.2"/>
<ellipse cx="45" cy="9.5" rx="5.5" ry="8" fill="#1848c8"/><path d="M42 6l6 6l-3 3v-11l3 3l-6 6" stroke="#fff" fill="none" stroke-width="1.3"/>
<rect x="57" y="2" width="12" height="9" fill="#f0d848" stroke="#886" stroke-width="0.6"/><rect x="55" y="9" width="16" height="8" fill="#4a7ad0"/><path d="M57 13h5M64 13h5" stroke="#fff"/><circle cx="60" cy="14" r="2" fill="#e03030"/>
<rect x="75" y="4" width="9" height="7" fill="#4a5a9a"/><rect x="79" y="8" width="9" height="7" fill="#7a8ac0"/><path d="M84 11l6 6M90 11l-6 6" stroke="#e01010" stroke-width="2"/>
<circle cx="99" cy="9.5" r="5" fill="#888"/><circle cx="99" cy="9.5" r="2.5" fill="#444"/><path d="M104 4q4 5 0 11" stroke="#8ab" fill="none" stroke-width="1.4"/>
<path d="M111 3l4 8l6 4" stroke="#222" fill="none" stroke-width="2"/><rect x="116" y="12" width="9" height="5" fill="#d8d040" stroke="#553" stroke-width="0.6"/>
<rect x="129" y="2" width="15" height="15" fill="#e02020"/><path d="M139 3l-6 6h4l-4 7l7-8h-4z" fill="#fff"/>
</svg>
<div class="t" style="left:1402px;top:880px;font-size:11px;color:#000;letter-spacing:-0.25px;">22:00</div>
</body></html>
